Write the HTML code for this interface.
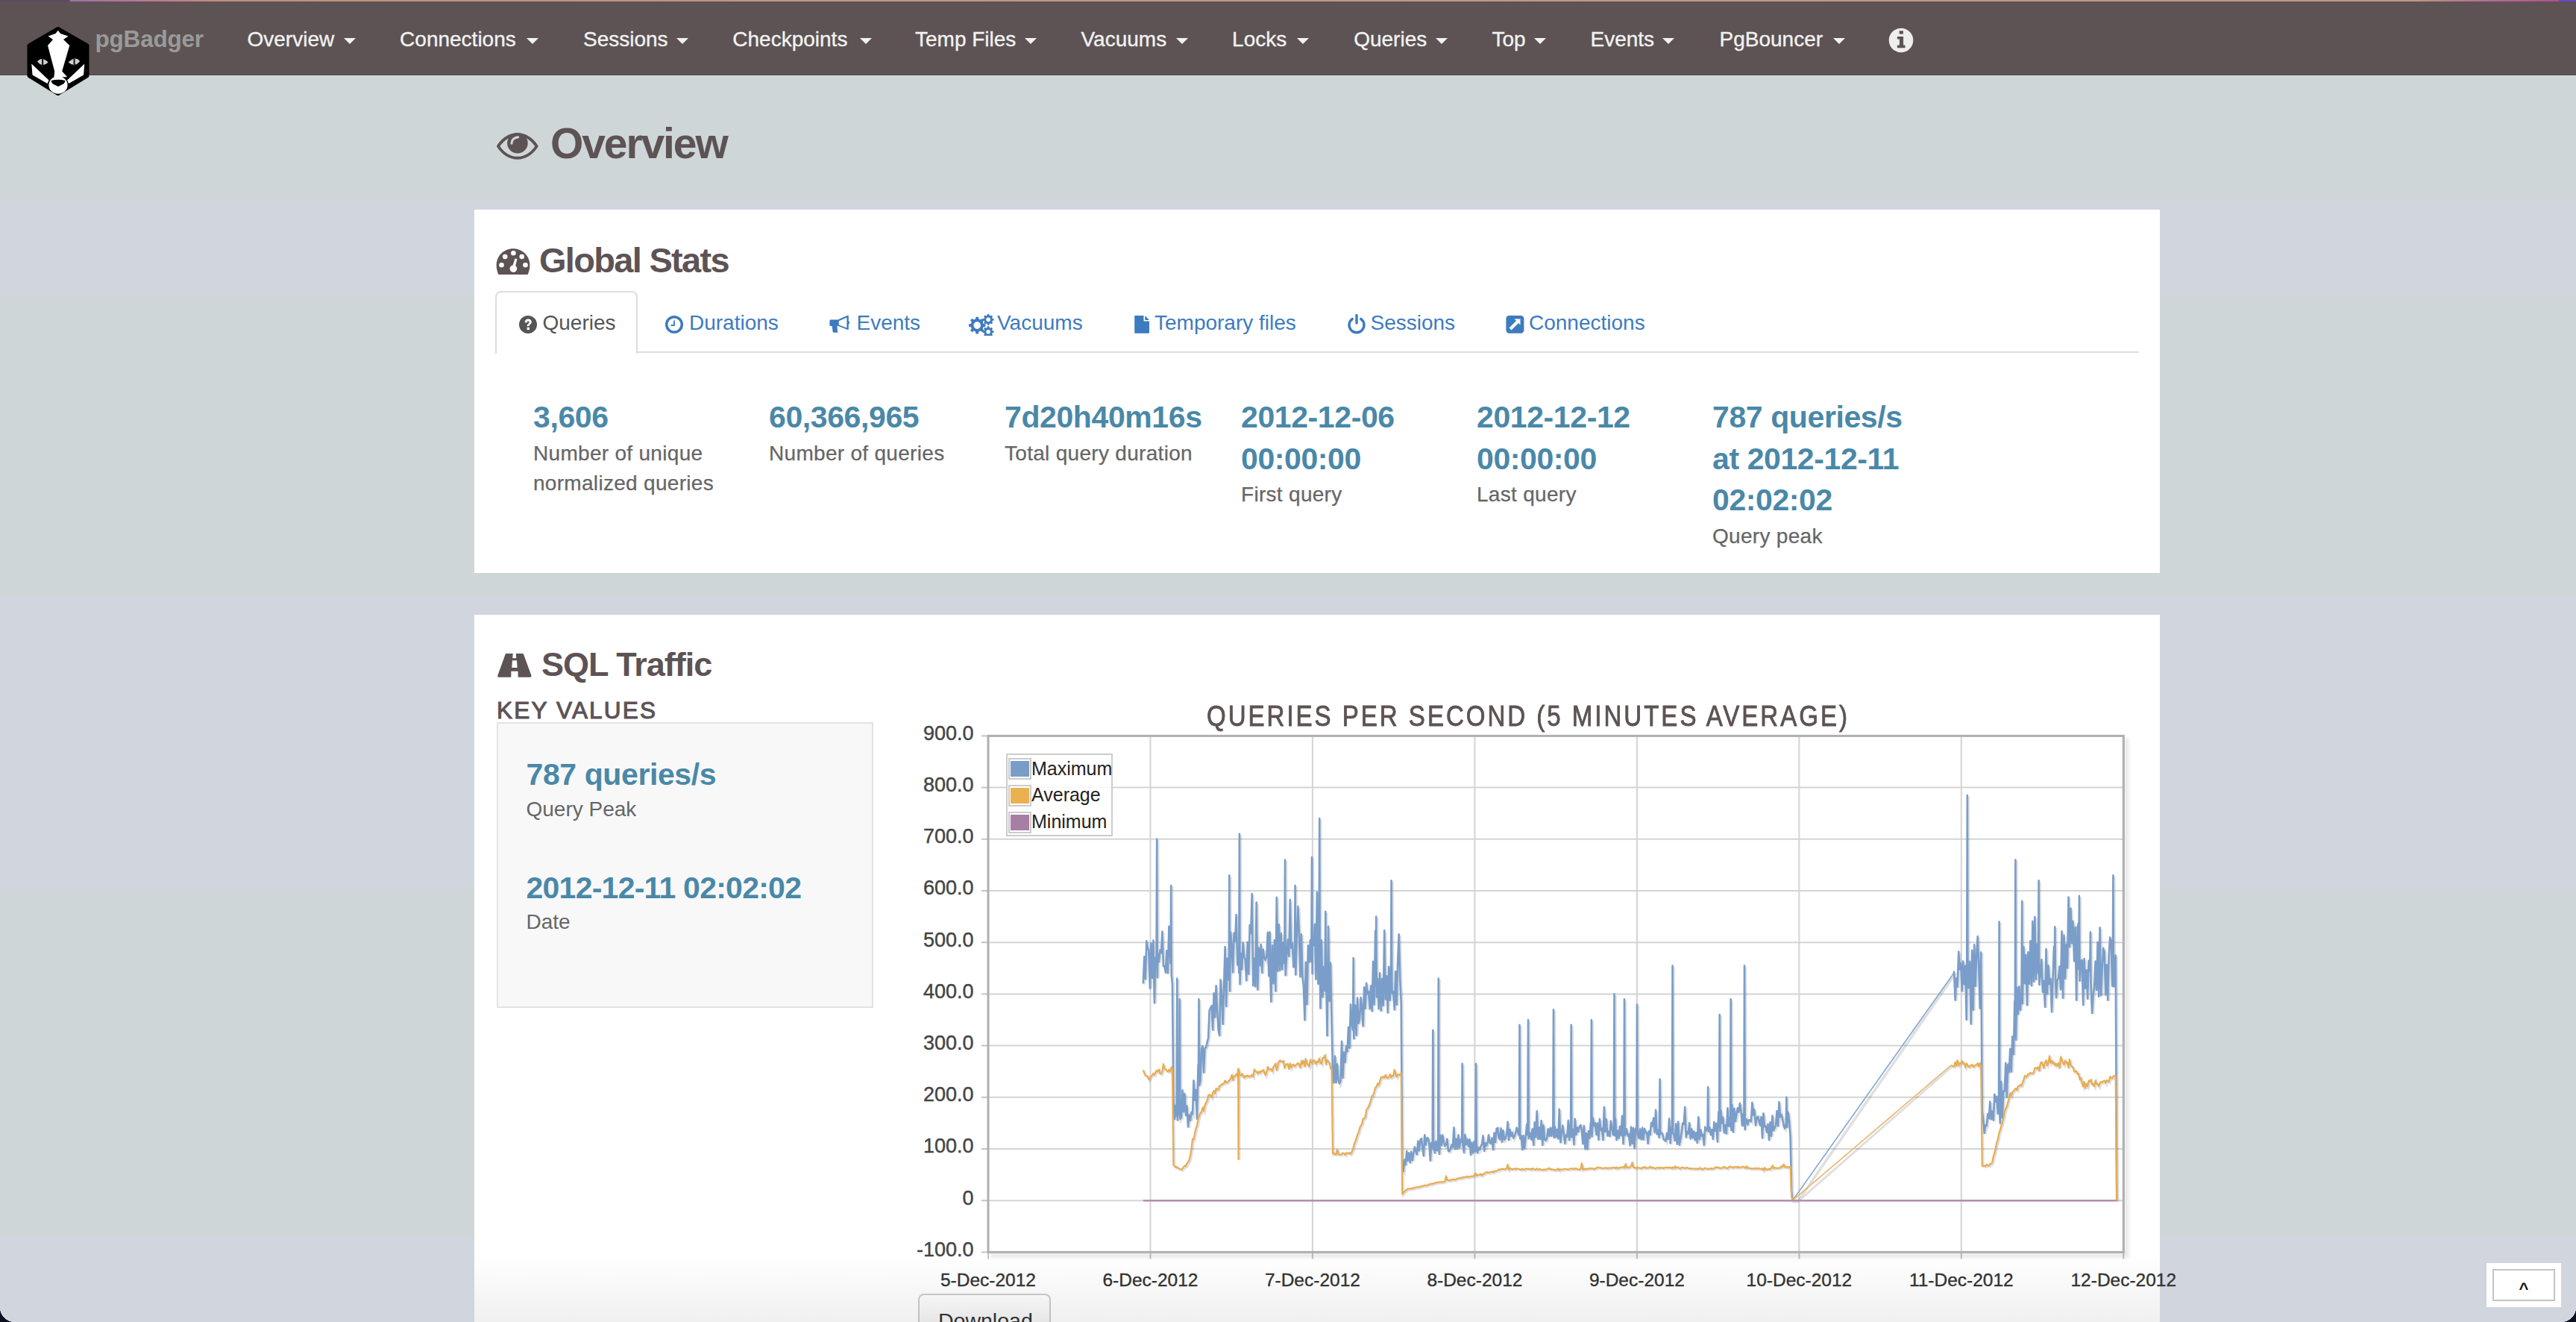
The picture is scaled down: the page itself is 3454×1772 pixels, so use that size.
<!DOCTYPE html>
<html><head><meta charset="utf-8"><title>pgBadger</title>
<style>
html,body{margin:0;padding:0;}
body{width:3454px;height:1772px;overflow:hidden;position:relative;background:linear-gradient(#ced6d8 0,#ced6d8 269px,#d1d5dd 269px,#d1d5dd 396px,#ced6d8 396px,#ced6d8 797px,#d1d5dd 797px,#d1d5dd 1191px,#ced6d8 1191px,#ced6d8 1658px,#d1d5dd 1658px);font-family:"Liberation Sans",sans-serif;}
.t{position:absolute;white-space:nowrap;font-family:"Liberation Sans",sans-serif;}
</style></head><body>
<div style="position:absolute;left:0px;top:0px;width:3454px;height:2px;background:linear-gradient(90deg,#5e4a5e 0,#5e4a5e 93px,#a070a8 94px,#c07a90 220px,#c09078 300px,#c09a80 2000px,#c09680 3240px,#b87890 3300px,#b05090 3430px,#6a48c8 3432px,#6a48c8 100%)"></div>
<div style="position:absolute;left:0px;top:2px;width:3454px;height:99px;background:#5d5354"></div>
<div style="position:absolute;left:0px;top:100px;width:3454px;height:1px;background:#4f4748"></div>
<div style="position:absolute;left:0px;top:101px;width:3454px;height:1px;background:#d6dde0"></div>
<svg style="position:absolute;left:0;top:0" width="140" height="140" viewBox="0 0 140 140">
<polygon points="77.8,38.5 117,61 117,101.5 77.8,125.5 39,101.5 39,61" fill="#000" stroke="#000" stroke-width="5" stroke-linejoin="round"/>
<path d="M77.8,40.8 L81,45 L91.5,48.5 L85,53 L93.3,60.9 L83.2,95.6 L90.2,103.3 L72.4,103.3 L73.2,95.6 L64,60.9 L71,53 L64.5,48.5 L74.5,45Z" fill="#fff"/>
<path d="M42.3,85.6 L43.5,100.5 L63.5,112 L65.5,107.5Z" fill="#fff"/>
<path d="M113.3,85.6 L112.1,100.5 L92.1,112 L90.1,107.5Z" fill="#fff"/>
<ellipse cx="78" cy="114" rx="12.6" ry="11.8" fill="#fff"/>
<path d="M68.6,108 Q78,105.5 87.5,108 Q87,112.5 82,114 L78,116 L74,114 Q69,112.5 68.6,108Z" fill="#000"/>
<path d="M50,82.5 Q56,75 64.7,83.5 Q57,91 50,82.5Z" fill="#d0d0d0"/>
<path d="M107.2,82 Q101,74.5 91.7,83.5 Q100,91 107.2,82Z" fill="#d0d0d0"/>
<rect x="56" y="79" width="2.2" height="9" fill="#222"/><rect x="98.5" y="79" width="2.2" height="9" fill="#222"/>
</svg>
<div class="t" style="left:127.5px;top:36.8px;font-size:31.5px;line-height:31.5px;color:#9a9a9a;font-weight:700;letter-spacing:-0.2px;">pgBadger</div>
<div class="t" style="left:331.5px;top:39.3px;font-size:28px;line-height:28px;color:#f2f2f2;font-weight:400;-webkit-text-stroke:0.35px #f2f2f2;">Overview</div>
<div style="position:absolute;left:461.0px;top:51px;width:0;height:0;border-left:8px solid transparent;border-right:8px solid transparent;border-top:8px solid #f2f2f2"></div>
<div class="t" style="left:536.1px;top:39.3px;font-size:28px;line-height:28px;color:#f2f2f2;font-weight:400;-webkit-text-stroke:0.35px #f2f2f2;">Connections</div>
<div style="position:absolute;left:705.6px;top:51px;width:0;height:0;border-left:8px solid transparent;border-right:8px solid transparent;border-top:8px solid #f2f2f2"></div>
<div class="t" style="left:782.0px;top:39.3px;font-size:28px;line-height:28px;color:#f2f2f2;font-weight:400;-webkit-text-stroke:0.35px #f2f2f2;">Sessions</div>
<div style="position:absolute;left:907.0px;top:51px;width:0;height:0;border-left:8px solid transparent;border-right:8px solid transparent;border-top:8px solid #f2f2f2"></div>
<div class="t" style="left:982.3px;top:39.3px;font-size:28px;line-height:28px;color:#f2f2f2;font-weight:400;-webkit-text-stroke:0.35px #f2f2f2;">Checkpoints</div>
<div style="position:absolute;left:1153.0px;top:51px;width:0;height:0;border-left:8px solid transparent;border-right:8px solid transparent;border-top:8px solid #f2f2f2"></div>
<div class="t" style="left:1227.0px;top:39.3px;font-size:28px;line-height:28px;color:#f2f2f2;font-weight:400;-webkit-text-stroke:0.35px #f2f2f2;">Temp Files</div>
<div style="position:absolute;left:1374.0px;top:51px;width:0;height:0;border-left:8px solid transparent;border-right:8px solid transparent;border-top:8px solid #f2f2f2"></div>
<div class="t" style="left:1449.5px;top:39.3px;font-size:28px;line-height:28px;color:#f2f2f2;font-weight:400;-webkit-text-stroke:0.35px #f2f2f2;">Vacuums</div>
<div style="position:absolute;left:1577.0px;top:51px;width:0;height:0;border-left:8px solid transparent;border-right:8px solid transparent;border-top:8px solid #f2f2f2"></div>
<div class="t" style="left:1652.1px;top:39.3px;font-size:28px;line-height:28px;color:#f2f2f2;font-weight:400;-webkit-text-stroke:0.35px #f2f2f2;">Locks</div>
<div style="position:absolute;left:1739.0px;top:51px;width:0;height:0;border-left:8px solid transparent;border-right:8px solid transparent;border-top:8px solid #f2f2f2"></div>
<div class="t" style="left:1815.2px;top:39.3px;font-size:28px;line-height:28px;color:#f2f2f2;font-weight:400;-webkit-text-stroke:0.35px #f2f2f2;">Queries</div>
<div style="position:absolute;left:1924.6px;top:51px;width:0;height:0;border-left:8px solid transparent;border-right:8px solid transparent;border-top:8px solid #f2f2f2"></div>
<div class="t" style="left:2000.5px;top:39.3px;font-size:28px;line-height:28px;color:#f2f2f2;font-weight:400;-webkit-text-stroke:0.35px #f2f2f2;">Top</div>
<div style="position:absolute;left:2057.0px;top:51px;width:0;height:0;border-left:8px solid transparent;border-right:8px solid transparent;border-top:8px solid #f2f2f2"></div>
<div class="t" style="left:2132.5px;top:39.3px;font-size:28px;line-height:28px;color:#f2f2f2;font-weight:400;-webkit-text-stroke:0.35px #f2f2f2;">Events</div>
<div style="position:absolute;left:2229.0px;top:51px;width:0;height:0;border-left:8px solid transparent;border-right:8px solid transparent;border-top:8px solid #f2f2f2"></div>
<div class="t" style="left:2305.5px;top:39.3px;font-size:28px;line-height:28px;color:#f2f2f2;font-weight:400;-webkit-text-stroke:0.35px #f2f2f2;">PgBouncer</div>
<div style="position:absolute;left:2457.5px;top:51px;width:0;height:0;border-left:8px solid transparent;border-right:8px solid transparent;border-top:8px solid #f2f2f2"></div>
<svg style="position:absolute;left:2532px;top:37px" width="34" height="34" viewBox="0 0 34 34">
<circle cx="17" cy="17" r="16.3" fill="#eee"/>
<rect x="14.7" y="4.3" width="5.2" height="4.3" fill="#5d5354"/>
<path d="M11.9,11.9 H20.1 V23.5 H22.5 V27.2 H11.9 V23.5 H14.9 V15.6 H11.9Z" fill="#5d5354"/>
</svg>
<svg style="position:absolute;left:664px;top:176px" width="60" height="40" viewBox="0 0 60 40">
<path d="M3.9,20 C10,11 19,4.2 29.8,4.2 C40.6,4.2 49.6,11 55.7,20 C49.6,29 40.6,35.8 29.8,35.8 C19,35.8 10,29 3.9,20Z" fill="none" stroke="#5d5354" stroke-width="3.9" stroke-linejoin="round"/>
<circle cx="29.9" cy="15.8" r="13.8" fill="#5d5354"/>
<path d="M22,16.2 C22,11.5 25.5,8.2 30.5,7.8" fill="none" stroke="#cfd6d9" stroke-width="3.2" stroke-linecap="round"/>
</svg>
<div class="t" style="left:738.0px;top:163.7px;font-size:57px;line-height:57px;color:#5d5354;font-weight:700;letter-spacing:-2.1px;">Overview</div>
<div style="position:absolute;left:636px;top:281px;width:2260px;height:487px;background:#fff"></div>
<svg style="position:absolute;left:664px;top:331px" width="50" height="40" viewBox="0 0 50 40">
<path d="M4.5,37 C2.5,33 1.6,28.5 1.6,24.4 C1.6,12 11.6,2.2 24,2.2 C36.4,2.2 46.4,12 46.4,24.4 C46.4,28.5 45.5,33 43.5,37Z" fill="#5d5354"/>
<g fill="#fff"><circle cx="24.4" cy="8.3" r="3.3"/><circle cx="13.2" cy="13" r="3.3"/><circle cx="35.7" cy="13" r="3.3"/><circle cx="8.5" cy="24.2" r="3.3"/><circle cx="40.5" cy="24.2" r="3.3"/><circle cx="24.4" cy="29.2" r="4.8"/>
<path d="M26.5,15.5 L29.5,16 L26.5,28 L22.5,28Z"/></g>
</svg>
<div class="t" style="left:723.0px;top:324.7px;font-size:47px;line-height:47px;color:#5d5354;font-weight:700;letter-spacing:-1.7px;">Global Stats</div>
<div style="position:absolute;left:664px;top:471px;width:2204px;height:2px;background:#ddd"></div>
<div style="position:absolute;left:664px;top:390px;width:191px;height:84px;background:#fff;border:2px solid #ddd;border-bottom:none;border-radius:8px 8px 0 0;box-sizing:border-box"></div>
<svg style="position:absolute;left:695px;top:422px" width="26" height="26" viewBox="0 0 26 26">
<circle cx="13" cy="13" r="12" fill="#555"/>
<path d="M8.6,10.2 C8.6,7.4 10.6,5.6 13.3,5.6 C16,5.6 17.8,7.3 17.8,9.6 C17.8,12.6 14.7,12.9 14.7,15.3 L11.6,15.3 C11.6,11.6 14.6,11.5 14.6,9.9 C14.6,9.1 14.1,8.5 13.1,8.5 C12.1,8.5 11.6,9.2 11.6,10.5Z" fill="#fff"/>
<rect x="11.6" y="16.8" width="3.3" height="3.4" fill="#fff"/>
</svg>
<div class="t" style="left:727.5px;top:419.1px;font-size:28px;line-height:28px;color:#555;font-weight:400;">Queries</div>
<svg style="position:absolute;left:891px;top:422px" width="26" height="26" viewBox="0 0 26 26">
<circle cx="13" cy="13" r="10.3" fill="none" stroke="#3d7bbf" stroke-width="3.5"/>
<path d="M13,7.6 V14 H8.6" fill="none" stroke="#3d7bbf" stroke-width="1.8"/>
</svg>
<div class="t" style="left:924.0px;top:419.1px;font-size:28px;line-height:28px;color:#3d7bbf;font-weight:400;">Durations</div>
<svg style="position:absolute;left:1111px;top:422px" width="30" height="26" viewBox="0 0 30 26">
<path d="M1.5,7.5 Q1,6.8 2.5,6.5 L12.5,6.5 L25.6,0.8 Q26.8,0.4 26.8,1.8 L26.8,8.6 Q28.2,9 28.2,10.4 Q28.2,11.8 26.8,12.2 L26.8,19 Q26.8,20.3 25.6,19.9 L13,15 L11.5,15 L12,22 Q13,23 12,23.8 L6.5,23.8 Q5.8,23.5 5.6,22.5 L4.6,15 L2.5,15 Q1.3,14.7 1.3,13.5Z M13.8,8.2 V13.4 L24.4,17.6 V3.8Z" fill="#3d7bbf" fill-rule="evenodd"/>
</svg>
<div class="t" style="left:1148.5px;top:419.1px;font-size:28px;line-height:28px;color:#3d7bbf;font-weight:400;">Events</div>
<svg style="position:absolute;left:1299px;top:420px" width="34" height="30" viewBox="0 0 34 30">
<g fill="#3d7bbf">
<path d="M9.6,4.8 L12.8,4.8 L13.4,7.6 L15.6,8.6 L18,7 L20.3,9.3 L18.7,11.7 L19.6,13.9 L22.4,14.5 L22.4,17.7 L19.6,18.3 L18.7,20.5 L20.3,22.9 L18,25.2 L15.6,23.6 L13.4,24.6 L12.8,27.4 L9.6,27.4 L9,24.6 L6.8,23.6 L4.4,25.2 L2.1,22.9 L3.7,20.5 L2.8,18.3 L0,17.7 L0,14.5 L2.8,13.9 L3.7,11.7 L2.1,9.3 L4.4,7 L6.8,8.6 L9,7.6Z M11.2,11.3 A4.8,4.8 0 1,0 11.2,20.9 A4.8,4.8 0 1,0 11.2,11.3Z" fill-rule="evenodd"/>
<path d="M25,1 L27.2,1 L27.6,2.8 L29,3.4 L30.6,2.4 L32.1,3.9 L31.1,5.5 L31.7,6.9 L33.5,7.3 L33.5,9.5 L31.7,9.9 L31.1,11.3 L32.1,12.9 L30.6,14.4 L29,13.4 L27.6,14 L27.2,15.8 L25,15.8 L24.6,14 L23.2,13.4 L21.6,14.4 L20.1,12.9 L21.1,11.3 L20.5,9.9 L18.7,9.5 L18.7,7.3 L20.5,6.9 L21.1,5.5 L20.1,3.9 L21.6,2.4 L23.2,3.4 L24.6,2.8Z M26.1,5.6 A2.8,2.8 0 1,0 26.1,11.2 A2.8,2.8 0 1,0 26.1,5.6Z" fill-rule="evenodd"/>
<path d="M25,17.3 L27.2,17.3 L27.6,19.1 L29,19.7 L30.6,18.7 L32.1,20.2 L31.1,21.8 L31.7,23.2 L33.5,23.6 L33.5,25.8 L31.7,26.2 L31.1,27.6 L32.1,29.2 L30.6,30.7 L29,29.7 L27.6,30.3 L27.2,32.1 L25,32.1 L24.6,30.3 L23.2,29.7 L21.6,30.7 L20.1,29.2 L21.1,27.6 L20.5,26.2 L18.7,25.8 L18.7,23.6 L20.5,23.2 L21.1,21.8 L20.1,20.2 L21.6,18.7 L23.2,19.7 L24.6,19.1Z M26.1,21.9 A2.8,2.8 0 1,0 26.1,27.5 A2.8,2.8 0 1,0 26.1,21.9Z" fill-rule="evenodd"/>
</g></svg>
<div class="t" style="left:1337.0px;top:419.1px;font-size:28px;line-height:28px;color:#3d7bbf;font-weight:400;">Vacuums</div>
<svg style="position:absolute;left:1520px;top:422px" width="24" height="26" viewBox="0 0 24 26">
<path d="M1.8,1 L13.5,1 L13.5,8.5 L21,8.5 L21,23.8 Q21,24.8 20,24.8 L2.2,24.8 Q1.2,24.8 1.2,23.8 L1.2,1.8 Q1.2,1 1.8,1Z M15.3,1.2 L21,7 L15.3,7Z" fill="#3d7bbf"/>
</svg>
<div class="t" style="left:1548.0px;top:419.1px;font-size:28px;line-height:28px;color:#3d7bbf;font-weight:400;">Temporary files</div>
<svg style="position:absolute;left:1805px;top:420px" width="28" height="28" viewBox="0 0 28 28">
<path d="M8.3,7.5 A10,10 0 1,0 19.7,7.5" fill="none" stroke="#3d7bbf" stroke-width="3.4" stroke-linecap="round"/>
<path d="M14,2.5 V13" fill="none" stroke="#3d7bbf" stroke-width="3.4" stroke-linecap="round"/>
</svg>
<div class="t" style="left:1837.5px;top:419.1px;font-size:28px;line-height:28px;color:#3d7bbf;font-weight:400;">Sessions</div>
<svg style="position:absolute;left:2018px;top:422px" width="27" height="26" viewBox="0 0 27 26">
<rect x="1.4" y="1" width="24" height="23.8" rx="4.2" fill="#3d7bbf"/>
<path d="M5.5,17.5 L15,8 L12.5,5.6 L20.5,5.6 L20.5,13.6 L18,11.1 L8.6,20.6Z" fill="#fff"/>
</svg>
<div class="t" style="left:2050.0px;top:419.1px;font-size:28px;line-height:28px;color:#3d7bbf;font-weight:400;">Connections</div>
<div class="t" style="left:715.0px;top:539.2px;font-size:41px;line-height:41px;color:#4a88a8;font-weight:700;letter-spacing:-0.4px;">3,606</div>
<div class="t" style="left:715.0px;top:593.7px;font-size:28px;line-height:28px;color:#666;font-weight:400;letter-spacing:0.3px;-webkit-text-stroke:0.25px #666;">Number of unique</div>
<div class="t" style="left:715.0px;top:633.7px;font-size:28px;line-height:28px;color:#666;font-weight:400;letter-spacing:0.3px;-webkit-text-stroke:0.25px #666;">normalized queries</div>
<div class="t" style="left:1031.0px;top:539.2px;font-size:41px;line-height:41px;color:#4a88a8;font-weight:700;letter-spacing:-0.4px;">60,366,965</div>
<div class="t" style="left:1031.0px;top:593.7px;font-size:28px;line-height:28px;color:#666;font-weight:400;letter-spacing:0.3px;-webkit-text-stroke:0.25px #666;">Number of queries</div>
<div class="t" style="left:1347.0px;top:539.2px;font-size:41px;line-height:41px;color:#4a88a8;font-weight:700;letter-spacing:-0.4px;">7d20h40m16s</div>
<div class="t" style="left:1347.0px;top:593.7px;font-size:28px;line-height:28px;color:#666;font-weight:400;letter-spacing:0.3px;-webkit-text-stroke:0.25px #666;">Total query duration</div>
<div class="t" style="left:1664.0px;top:539.2px;font-size:41px;line-height:41px;color:#4a88a8;font-weight:700;letter-spacing:-0.4px;">2012-12-06</div>
<div class="t" style="left:1664.0px;top:594.8px;font-size:41px;line-height:41px;color:#4a88a8;font-weight:700;letter-spacing:-0.4px;">00:00:00</div>
<div class="t" style="left:1664.0px;top:649.3px;font-size:28px;line-height:28px;color:#666;font-weight:400;letter-spacing:0.3px;-webkit-text-stroke:0.25px #666;">First query</div>
<div class="t" style="left:1980.0px;top:539.2px;font-size:41px;line-height:41px;color:#4a88a8;font-weight:700;letter-spacing:-0.4px;">2012-12-12</div>
<div class="t" style="left:1980.0px;top:594.8px;font-size:41px;line-height:41px;color:#4a88a8;font-weight:700;letter-spacing:-0.4px;">00:00:00</div>
<div class="t" style="left:1980.0px;top:649.3px;font-size:28px;line-height:28px;color:#666;font-weight:400;letter-spacing:0.3px;-webkit-text-stroke:0.25px #666;">Last query</div>
<div class="t" style="left:2296.0px;top:539.2px;font-size:41px;line-height:41px;color:#4a88a8;font-weight:700;letter-spacing:-0.4px;">787 queries/s</div>
<div class="t" style="left:2296.0px;top:594.8px;font-size:41px;line-height:41px;color:#4a88a8;font-weight:700;letter-spacing:-0.4px;">at 2012-12-11</div>
<div class="t" style="left:2296.0px;top:650.4px;font-size:41px;line-height:41px;color:#4a88a8;font-weight:700;letter-spacing:-0.4px;">02:02:02</div>
<div class="t" style="left:2296.0px;top:704.9px;font-size:28px;line-height:28px;color:#666;font-weight:400;letter-spacing:0.3px;-webkit-text-stroke:0.25px #666;">Query peak</div>
<div style="position:absolute;left:636px;top:824px;width:2260px;height:948px;background:#fff"></div>
<svg style="position:absolute;left:665px;top:874px" width="50" height="36" viewBox="0 0 50 36">
<path d="M13.6,2.1 L22.7,2.1 L22.2,8.2 L27.2,8.2 L26.8,2.1 L35.8,2.1 Q36.6,2.1 37,3 L47.5,31.5 Q47.9,33.7 46,33.7 L29.7,33.7 L29.5,25.7 L20.4,25.7 L20.3,33.7 L3.6,33.7 Q1.8,33.7 2.3,31.5 L12.6,3 Q13,2.1 13.6,2.1Z M21.9,11.2 L21.3,21 L28.6,21 L28,11.2Z" fill="#5d5354" fill-rule="evenodd"/>
</svg>
<div class="t" style="left:726.0px;top:868.4px;font-size:45px;line-height:45px;color:#5d5354;font-weight:700;letter-spacing:-1.0px;">SQL Traffic</div>
<div class="t" style="left:666.0px;top:936.6px;font-size:31.5px;line-height:31.5px;color:#5d5354;font-weight:400;letter-spacing:2.2px;-webkit-text-stroke:1.1px #5d5354;">KEY VALUES</div>
<div style="position:absolute;left:666px;top:968px;width:505px;height:383px;background:#f8f8f8;border:2px solid #e3e3e3;box-sizing:border-box"></div>
<div class="t" style="left:705.5px;top:1018.3px;font-size:41px;line-height:41px;color:#4a88a8;font-weight:700;letter-spacing:-0.4px;">787 queries/s</div>
<div class="t" style="left:705.5px;top:1070.9px;font-size:28px;line-height:28px;color:#666;font-weight:400;">Query Peak</div>
<div class="t" style="left:705.5px;top:1169.8px;font-size:41px;line-height:41px;color:#4a88a8;font-weight:700;letter-spacing:-0.75px;">2012-12-11 02:02:02</div>
<div class="t" style="left:705.5px;top:1222.3px;font-size:28px;line-height:28px;color:#666;font-weight:400;">Date</div>
<svg style="position:absolute;left:0;top:0" width="3454" height="1772" viewBox="0 0 3454 1772">
<line x1="1325.0" y1="1678.4" x2="2847.3" y2="1678.4" stroke="#d4d4d4" stroke-width="2"/>
<line x1="1316.0" y1="1678.4" x2="1325.0" y2="1678.4" stroke="#c4c4c4" stroke-width="2"/>
<line x1="1325.0" y1="1609.2" x2="2847.3" y2="1609.2" stroke="#d4d4d4" stroke-width="2"/>
<line x1="1316.0" y1="1609.2" x2="1325.0" y2="1609.2" stroke="#c4c4c4" stroke-width="2"/>
<line x1="1325.0" y1="1540.0" x2="2847.3" y2="1540.0" stroke="#d4d4d4" stroke-width="2"/>
<line x1="1316.0" y1="1540.0" x2="1325.0" y2="1540.0" stroke="#c4c4c4" stroke-width="2"/>
<line x1="1325.0" y1="1470.8" x2="2847.3" y2="1470.8" stroke="#d4d4d4" stroke-width="2"/>
<line x1="1316.0" y1="1470.8" x2="1325.0" y2="1470.8" stroke="#c4c4c4" stroke-width="2"/>
<line x1="1325.0" y1="1401.6" x2="2847.3" y2="1401.6" stroke="#d4d4d4" stroke-width="2"/>
<line x1="1316.0" y1="1401.6" x2="1325.0" y2="1401.6" stroke="#c4c4c4" stroke-width="2"/>
<line x1="1325.0" y1="1332.4" x2="2847.3" y2="1332.4" stroke="#d4d4d4" stroke-width="2"/>
<line x1="1316.0" y1="1332.4" x2="1325.0" y2="1332.4" stroke="#c4c4c4" stroke-width="2"/>
<line x1="1325.0" y1="1263.2" x2="2847.3" y2="1263.2" stroke="#d4d4d4" stroke-width="2"/>
<line x1="1316.0" y1="1263.2" x2="1325.0" y2="1263.2" stroke="#c4c4c4" stroke-width="2"/>
<line x1="1325.0" y1="1194.0" x2="2847.3" y2="1194.0" stroke="#d4d4d4" stroke-width="2"/>
<line x1="1316.0" y1="1194.0" x2="1325.0" y2="1194.0" stroke="#c4c4c4" stroke-width="2"/>
<line x1="1325.0" y1="1124.8" x2="2847.3" y2="1124.8" stroke="#d4d4d4" stroke-width="2"/>
<line x1="1316.0" y1="1124.8" x2="1325.0" y2="1124.8" stroke="#c4c4c4" stroke-width="2"/>
<line x1="1325.0" y1="1055.6" x2="2847.3" y2="1055.6" stroke="#d4d4d4" stroke-width="2"/>
<line x1="1316.0" y1="1055.6" x2="1325.0" y2="1055.6" stroke="#c4c4c4" stroke-width="2"/>
<line x1="1325.0" y1="986.4" x2="2847.3" y2="986.4" stroke="#d4d4d4" stroke-width="2"/>
<line x1="1316.0" y1="986.4" x2="1325.0" y2="986.4" stroke="#c4c4c4" stroke-width="2"/>
<line x1="1325.0" y1="986.4" x2="1325.0" y2="1678.4" stroke="#d4d4d4" stroke-width="2"/>
<line x1="1325.0" y1="1678.4" x2="1325.0" y2="1687.4" stroke="#c4c4c4" stroke-width="2"/>
<line x1="1542.5" y1="986.4" x2="1542.5" y2="1678.4" stroke="#d4d4d4" stroke-width="2"/>
<line x1="1542.5" y1="1678.4" x2="1542.5" y2="1687.4" stroke="#c4c4c4" stroke-width="2"/>
<line x1="1759.9" y1="986.4" x2="1759.9" y2="1678.4" stroke="#d4d4d4" stroke-width="2"/>
<line x1="1759.9" y1="1678.4" x2="1759.9" y2="1687.4" stroke="#c4c4c4" stroke-width="2"/>
<line x1="1977.4" y1="986.4" x2="1977.4" y2="1678.4" stroke="#d4d4d4" stroke-width="2"/>
<line x1="1977.4" y1="1678.4" x2="1977.4" y2="1687.4" stroke="#c4c4c4" stroke-width="2"/>
<line x1="2194.9" y1="986.4" x2="2194.9" y2="1678.4" stroke="#d4d4d4" stroke-width="2"/>
<line x1="2194.9" y1="1678.4" x2="2194.9" y2="1687.4" stroke="#c4c4c4" stroke-width="2"/>
<line x1="2412.4" y1="986.4" x2="2412.4" y2="1678.4" stroke="#d4d4d4" stroke-width="2"/>
<line x1="2412.4" y1="1678.4" x2="2412.4" y2="1687.4" stroke="#c4c4c4" stroke-width="2"/>
<line x1="2629.8" y1="986.4" x2="2629.8" y2="1678.4" stroke="#d4d4d4" stroke-width="2"/>
<line x1="2629.8" y1="1678.4" x2="2629.8" y2="1687.4" stroke="#c4c4c4" stroke-width="2"/>
<line x1="2847.3" y1="986.4" x2="2847.3" y2="1678.4" stroke="#d4d4d4" stroke-width="2"/>
<line x1="2847.3" y1="1678.4" x2="2847.3" y2="1687.4" stroke="#c4c4c4" stroke-width="2"/>
<path d="M1328.0,1682.4 H2851.3 V989.4" fill="none" stroke="#000" stroke-opacity="0.09" stroke-width="6" filter="url(#blur)"/>
<defs><filter id="blur" x="-1%" y="-1%" width="102%" height="102%"><feGaussianBlur stdDeviation="2"/></filter></defs>
<rect x="1325.0" y="986.4" width="1522.3000000000002" height="692.0000000000001" fill="none" stroke="#b0b0b0" stroke-width="3"/>
<g transform="translate(1.5,1.5)" opacity="0.12"><polyline points="1532.8,1434.3 1534.3,1438.0 1535.8,1441.8 1537.3,1442.0 1538.8,1442.5 1540.3,1447.2 1541.9,1444.6 1543.4,1442.6 1544.9,1441.5 1546.4,1438.7 1547.9,1440.5 1549.4,1437.3 1550.9,1434.9 1552.4,1436.5 1553.9,1433.6 1555.4,1438.7 1556.9,1439.4 1558.4,1436.1 1559.9,1426.1 1561.4,1432.4 1562.9,1433.4 1564.4,1435.0 1565.9,1436.4 1567.4,1433.9 1568.9,1436.3 1570.4,1430.6 1571.9,1433.1 1573.4,1561.7 1574.9,1562.9 1576.4,1564.7 1577.9,1564.0 1579.4,1565.5 1581.0,1566.4 1582.5,1567.1 1584.0,1567.8 1585.5,1566.4 1587.0,1564.4 1588.5,1562.3 1590.0,1563.0 1591.5,1559.5 1593.0,1557.6 1594.5,1554.7 1596.0,1548.6 1597.5,1540.0 1599.0,1526.7 1600.5,1527.2 1602.0,1519.4 1603.5,1512.4 1605.0,1508.8 1606.5,1500.1 1608.0,1495.3 1609.5,1492.2 1611.0,1490.3 1612.5,1484.6 1614.0,1489.2 1615.5,1481.8 1617.0,1477.9 1618.5,1475.9 1620.1,1468.3 1621.6,1467.2 1623.1,1468.2 1624.6,1471.1 1626.1,1465.4 1627.6,1462.0 1629.1,1465.7 1630.6,1458.9 1632.1,1460.4 1633.6,1460.5 1635.1,1455.4 1636.6,1455.3 1638.1,1453.1 1639.6,1453.1 1641.1,1452.0 1642.6,1448.5 1644.1,1451.1 1645.6,1450.6 1647.1,1449.2 1648.6,1447.9 1650.1,1445.5 1651.6,1440.8 1653.1,1448.0 1654.6,1442.7 1656.1,1442.6 1657.6,1439.8 1659.2,1441.9 1660.1,1432.7 1660.5,1553.8 1660.9,1432.7 1662.2,1440.7 1663.7,1441.7 1665.2,1439.1 1666.7,1442.1 1668.2,1444.6 1669.7,1442.1 1671.2,1442.8 1672.7,1441.4 1674.2,1443.3 1675.7,1442.4 1677.2,1442.5 1678.7,1440.5 1680.2,1443.1 1681.7,1433.7 1683.2,1435.8 1684.7,1436.4 1686.2,1438.9 1687.7,1436.3 1689.2,1438.1 1690.7,1435.6 1692.2,1436.4 1693.7,1433.9 1695.2,1437.4 1696.8,1441.2 1698.3,1436.8 1699.8,1430.1 1701.3,1433.3 1702.8,1433.4 1704.3,1432.6 1705.8,1436.0 1707.3,1430.3 1708.8,1428.1 1710.3,1425.6 1711.8,1434.5 1713.3,1427.9 1714.8,1422.9 1716.3,1421.2 1717.8,1422.9 1719.3,1423.3 1720.8,1421.9 1722.3,1431.5 1723.8,1427.3 1725.3,1426.3 1726.8,1426.0 1728.3,1432.9 1729.8,1425.4 1731.3,1430.7 1732.8,1427.5 1734.3,1426.7 1735.9,1429.3 1737.4,1427.7 1738.9,1426.3 1740.4,1424.8 1741.9,1426.8 1743.4,1431.2 1744.9,1422.1 1746.4,1426.0 1747.9,1421.7 1749.4,1429.5 1750.9,1419.3 1752.4,1426.0 1753.9,1427.1 1755.4,1429.7 1756.9,1420.7 1758.4,1424.7 1759.9,1424.6 1761.4,1420.9 1762.9,1422.8 1764.4,1426.2 1765.9,1422.7 1767.4,1424.0 1768.9,1418.7 1770.4,1423.7 1771.9,1426.3 1773.4,1418.1 1775.0,1417.8 1776.5,1414.4 1778.0,1426.7 1779.5,1420.8 1781.0,1423.2 1782.5,1424.1 1784.0,1432.1 1785.5,1431.0 1787.0,1546.5 1788.5,1545.7 1790.0,1547.2 1791.5,1547.3 1793.0,1540.4 1794.5,1546.8 1796.0,1547.7 1797.5,1547.6 1799.0,1546.7 1800.5,1545.4 1802.0,1546.3 1803.5,1548.0 1805.0,1545.1 1806.5,1546.1 1808.0,1545.9 1809.5,1544.8 1811.0,1546.8 1812.5,1544.0 1814.1,1540.2 1815.6,1534.0 1817.1,1530.4 1818.6,1526.2 1820.1,1520.8 1821.6,1518.1 1823.1,1512.0 1824.6,1509.1 1826.1,1506.4 1827.6,1499.7 1829.1,1499.4 1830.6,1497.1 1832.1,1487.6 1833.6,1485.6 1835.1,1483.1 1836.6,1479.3 1838.1,1474.4 1839.6,1468.8 1841.1,1468.2 1842.6,1463.2 1844.1,1457.7 1845.6,1456.8 1847.1,1452.3 1848.6,1454.3 1850.1,1449.3 1851.7,1443.7 1853.2,1444.5 1854.7,1442.9 1856.2,1444.4 1857.7,1440.8 1859.2,1444.3 1860.7,1444.9 1862.2,1443.7 1863.7,1440.1 1865.2,1444.3 1866.7,1441.7 1868.2,1442.4 1869.7,1433.8 1871.2,1439.4 1872.7,1443.5 1874.2,1440.2 1875.7,1440.8 1877.2,1439.8 1878.7,1438.1 1880.2,1600.6 1881.7,1598.7 1883.2,1597.2 1884.7,1595.5 1886.2,1594.5 1887.7,1593.4 1889.2,1593.4 1890.8,1593.4 1892.3,1593.1 1893.8,1592.6 1895.3,1592.8 1896.8,1591.9 1898.3,1591.5 1899.8,1591.3 1901.3,1591.3 1902.8,1590.9 1904.3,1590.5 1905.8,1590.2 1907.3,1589.5 1908.8,1589.3 1910.3,1588.7 1911.8,1589.0 1913.3,1588.8 1914.8,1588.1 1916.3,1587.6 1917.8,1586.7 1919.3,1587.1 1920.8,1586.6 1922.3,1586.2 1923.8,1585.9 1925.3,1584.9 1926.8,1585.1 1928.3,1584.9 1929.9,1584.2 1931.4,1584.7 1932.9,1584.1 1934.4,1584.5 1935.9,1584.0 1937.4,1583.2 1938.9,1576.4 1940.4,1581.9 1941.9,1581.7 1943.4,1582.1 1944.9,1582.0 1946.4,1581.1 1947.9,1581.1 1949.4,1580.4 1950.9,1581.5 1952.4,1580.7 1953.9,1579.7 1955.4,1579.4 1956.9,1579.1 1958.4,1578.6 1959.9,1579.2 1961.4,1577.9 1962.9,1577.5 1964.4,1577.7 1965.9,1577.7 1967.4,1576.7 1969.0,1578.0 1970.5,1577.3 1972.0,1576.5 1973.5,1576.9 1975.0,1576.5 1976.5,1575.7 1978.0,1572.7 1979.5,1576.0 1981.0,1574.6 1982.5,1574.6 1984.0,1574.8 1985.5,1573.4 1987.0,1575.6 1988.5,1573.6 1990.0,1573.6 1991.5,1571.8 1993.0,1571.4 1994.5,1571.2 1996.0,1571.9 1997.5,1571.4 1999.0,1570.7 2000.5,1570.3 2002.0,1571.5 2003.5,1569.6 2005.0,1569.6 2006.6,1569.3 2008.1,1568.8 2009.6,1567.4 2011.1,1567.9 2012.6,1567.1 2014.1,1566.6 2015.6,1567.0 2017.1,1567.0 2018.6,1567.1 2020.1,1566.1 2021.6,1561.0 2023.1,1568.1 2024.6,1566.1 2026.1,1566.5 2027.6,1567.4 2029.1,1566.5 2030.6,1566.3 2032.1,1567.3 2033.6,1566.0 2035.1,1566.6 2036.6,1566.8 2038.1,1567.4 2039.6,1567.9 2041.1,1566.6 2042.6,1567.5 2044.1,1567.6 2045.7,1566.3 2047.2,1566.8 2048.7,1566.9 2050.2,1566.9 2051.7,1566.6 2053.2,1567.7 2054.7,1565.9 2056.2,1566.8 2057.7,1567.6 2059.2,1567.4 2060.7,1566.1 2062.2,1567.9 2063.7,1567.3 2065.2,1566.9 2066.7,1567.7 2068.2,1568.4 2069.7,1567.4 2071.2,1567.6 2072.7,1567.7 2074.2,1566.9 2075.7,1566.5 2077.2,1565.6 2078.7,1567.3 2080.2,1567.1 2081.7,1567.4 2083.2,1567.6 2084.8,1568.7 2086.3,1567.5 2087.8,1567.7 2089.3,1566.2 2090.8,1568.8 2092.3,1567.3 2093.8,1567.7 2095.3,1567.5 2096.8,1566.9 2098.3,1566.8 2099.8,1566.9 2101.3,1567.3 2102.8,1567.4 2104.3,1567.2 2105.8,1566.7 2107.3,1566.4 2108.8,1566.3 2110.3,1567.1 2111.8,1566.2 2113.3,1566.1 2114.8,1567.1 2116.3,1567.7 2117.8,1567.3 2119.3,1567.1 2120.8,1559.2 2122.3,1567.7 2123.9,1566.3 2125.4,1567.4 2126.9,1566.4 2128.4,1567.0 2129.9,1566.2 2131.4,1565.8 2132.9,1566.6 2134.4,1565.8 2135.9,1566.4 2137.4,1567.4 2138.9,1566.0 2140.4,1565.8 2141.9,1564.7 2143.4,1564.7 2144.9,1565.5 2146.4,1565.2 2147.9,1565.6 2149.4,1565.8 2150.9,1565.7 2152.4,1565.5 2153.9,1565.2 2155.4,1566.2 2156.9,1565.5 2158.4,1565.7 2159.9,1565.2 2161.5,1565.6 2163.0,1564.9 2164.5,1564.6 2166.0,1566.0 2167.5,1564.4 2169.0,1566.0 2170.5,1565.6 2172.0,1564.6 2173.5,1565.0 2175.0,1564.4 2176.5,1564.2 2178.0,1565.5 2179.5,1560.5 2181.0,1564.9 2182.5,1564.9 2184.0,1564.6 2185.5,1564.2 2187.0,1563.4 2188.5,1558.6 2190.0,1564.1 2191.5,1565.4 2193.0,1565.2 2194.5,1565.8 2196.0,1564.6 2197.5,1565.2 2199.0,1565.6 2200.6,1566.2 2202.1,1564.7 2203.6,1565.2 2205.1,1563.8 2206.6,1565.6 2208.1,1565.4 2209.6,1565.3 2211.1,1565.1 2212.6,1563.6 2214.1,1565.4 2215.6,1564.9 2217.1,1565.2 2218.6,1566.1 2220.1,1565.6 2221.6,1565.3 2223.1,1565.0 2224.6,1565.8 2226.1,1564.8 2227.6,1565.3 2229.1,1565.4 2230.6,1565.8 2232.1,1565.0 2233.6,1565.0 2235.1,1564.6 2236.6,1565.2 2238.1,1564.7 2239.7,1564.9 2241.2,1565.9 2242.7,1564.7 2244.2,1566.0 2245.7,1563.3 2247.2,1565.4 2248.7,1564.7 2250.2,1564.4 2251.7,1566.2 2253.2,1566.3 2254.7,1564.7 2256.2,1564.9 2257.7,1565.3 2259.2,1566.0 2260.7,1565.4 2262.2,1564.9 2263.7,1565.7 2265.2,1566.6 2266.7,1566.0 2268.2,1566.2 2269.7,1566.4 2271.2,1566.5 2272.7,1566.4 2274.2,1566.6 2275.7,1566.4 2277.3,1566.8 2278.8,1565.6 2280.3,1565.6 2281.8,1567.5 2283.3,1566.9 2284.8,1566.3 2286.3,1565.6 2287.8,1566.3 2289.3,1566.8 2290.8,1566.6 2292.3,1566.5 2293.8,1565.8 2295.3,1566.9 2296.8,1566.4 2298.3,1565.8 2299.8,1565.0 2301.3,1564.2 2302.8,1565.1 2304.3,1564.7 2305.8,1565.8 2307.3,1565.7 2308.8,1565.5 2310.3,1564.8 2311.8,1563.8 2313.3,1565.4 2314.8,1565.4 2316.4,1566.1 2317.9,1564.1 2319.4,1563.8 2320.9,1563.7 2322.4,1564.8 2323.9,1565.2 2325.4,1563.8 2326.9,1564.1 2328.4,1564.9 2329.9,1563.5 2331.4,1564.9 2332.9,1564.6 2334.4,1564.3 2335.9,1564.0 2337.4,1563.5 2338.9,1564.8 2340.4,1565.7 2341.9,1563.1 2343.4,1565.7 2344.9,1565.7 2346.4,1565.8 2347.9,1566.2 2349.4,1566.3 2350.9,1566.5 2352.4,1566.0 2353.9,1565.6 2355.5,1566.7 2357.0,1565.9 2358.5,1565.8 2360.0,1566.8 2361.5,1566.8 2363.0,1566.1 2364.5,1568.8 2366.0,1565.2 2367.5,1567.7 2369.0,1567.1 2370.5,1567.5 2372.0,1566.6 2373.5,1567.3 2375.0,1565.6 2376.5,1562.4 2378.0,1566.2 2379.5,1565.2 2381.0,1565.5 2382.5,1565.6 2384.0,1565.6 2385.5,1565.5 2387.0,1565.1 2388.5,1563.2 2390.0,1563.9 2391.5,1560.8 2393.0,1564.1 2394.6,1563.7 2396.1,1564.9 2397.6,1564.2 2399.1,1564.3 2400.6,1564.4 2402.1,1602.7 2403.5,1609.2 2409.0,1609.2 2616.1,1427.9 2620.1,1429.7 2621.6,1423.8 2623.1,1428.9 2624.6,1421.1 2626.2,1428.1 2627.7,1425.4 2629.2,1425.3 2630.7,1422.2 2632.2,1425.4 2633.7,1424.9 2635.2,1430.8 2636.7,1425.5 2638.2,1427.7 2639.7,1430.1 2641.2,1429.7 2642.7,1427.8 2644.2,1427.1 2645.7,1430.1 2647.2,1428.6 2648.7,1427.6 2650.2,1427.3 2651.7,1425.2 2653.2,1429.6 2654.7,1425.1 2656.2,1428.8 2657.7,1562.3 2659.2,1562.6 2660.7,1562.6 2662.2,1563.2 2663.7,1560.9 2665.3,1562.1 2666.8,1562.3 2668.3,1560.0 2669.8,1559.8 2671.3,1557.8 2672.8,1549.9 2674.3,1545.6 2675.8,1538.1 2677.3,1531.7 2678.8,1526.8 2680.3,1518.8 2681.8,1515.0 2683.3,1509.1 2684.8,1504.8 2686.3,1498.7 2687.8,1490.1 2689.3,1486.0 2690.8,1483.0 2692.3,1477.4 2693.8,1471.2 2695.3,1465.4 2696.8,1468.9 2698.3,1464.3 2699.8,1462.3 2701.3,1460.7 2702.8,1458.8 2704.4,1461.0 2705.9,1455.8 2707.4,1455.5 2708.9,1454.0 2710.4,1455.5 2711.9,1451.4 2713.4,1447.5 2714.9,1441.8 2716.4,1443.6 2717.9,1442.6 2719.4,1439.6 2720.9,1440.0 2722.4,1437.6 2723.9,1438.7 2725.4,1439.1 2726.9,1436.8 2728.4,1431.5 2729.9,1431.3 2731.4,1432.6 2732.9,1430.1 2734.4,1435.4 2735.9,1425.0 2737.4,1423.6 2738.9,1426.5 2740.4,1431.7 2742.0,1423.6 2743.5,1421.5 2745.0,1428.0 2746.5,1424.9 2748.0,1415.3 2749.5,1424.7 2751.0,1421.8 2752.5,1425.3 2754.0,1423.9 2755.5,1428.2 2757.0,1426.0 2758.5,1428.8 2760.0,1424.8 2761.5,1431.1 2763.0,1416.9 2764.5,1420.1 2766.0,1424.8 2767.5,1427.3 2769.0,1421.5 2770.5,1424.8 2772.0,1424.1 2773.5,1431.2 2775.0,1419.9 2776.5,1427.7 2778.0,1430.0 2779.5,1430.1 2781.1,1436.4 2782.6,1435.5 2784.1,1435.6 2785.6,1440.0 2787.1,1439.2 2788.6,1447.2 2790.1,1444.9 2791.6,1451.7 2793.1,1456.7 2794.6,1449.8 2796.1,1458.6 2797.6,1452.9 2799.1,1456.0 2800.6,1448.4 2802.1,1449.7 2803.6,1447.1 2805.1,1453.6 2806.6,1452.6 2808.1,1456.3 2809.6,1448.4 2811.1,1452.9 2812.6,1453.3 2814.1,1456.1 2815.6,1451.4 2817.1,1450.1 2818.6,1451.0 2820.2,1449.1 2821.7,1448.4 2823.2,1451.8 2824.7,1447.7 2826.2,1449.1 2827.7,1450.1 2829.2,1443.2 2830.7,1445.0 2832.2,1445.1 2833.7,1442.4 2835.2,1441.8 2836.7,1442.1 2838.2,1609.2" fill="none" stroke="#000" stroke-width="3"/><polyline points="1532.8,1318.3 1534.3,1282.3 1535.8,1312.1 1537.3,1261.3 1538.8,1270.2 1540.3,1275.2 1541.9,1324.5 1543.4,1264.0 1544.9,1310.9 1546.4,1260.6 1547.9,1344.3 1549.4,1283.6 1550.5,1294.6 1551.2,1124.8 1551.8,1310.3 1552.4,1278.2 1553.9,1289.1 1555.4,1273.5 1556.9,1277.4 1558.4,1248.6 1559.9,1295.0 1561.4,1294.9 1562.9,1303.8 1564.4,1274.3 1565.9,1304.3 1567.4,1241.9 1568.9,1275.1 1569.5,1291.2 1570.2,1187.1 1570.8,1307.1 1571.9,1318.7 1573.4,1477.7 1574.9,1500.0 1576.4,1481.6 1577.7,1495.8 1578.3,1311.6 1579.0,1501.5 1579.4,1466.1 1581.1,1494.1 1581.7,1339.3 1582.4,1499.8 1584.0,1497.5 1585.5,1461.2 1587.0,1490.3 1588.5,1466.2 1590.0,1495.2 1591.5,1482.5 1593.0,1510.5 1594.5,1494.5 1596.0,1501.8 1597.5,1490.7 1599.0,1493.3 1600.5,1448.4 1602.0,1474.8 1603.5,1461.0 1605.0,1499.8 1606.5,1427.3 1606.9,1446.6 1607.5,1339.3 1608.2,1454.7 1609.5,1448.8 1611.0,1405.6 1612.5,1402.3 1614.0,1437.4 1615.5,1404.8 1617.0,1404.0 1618.5,1397.6 1620.1,1391.3 1621.6,1354.3 1623.1,1350.9 1624.6,1348.1 1626.1,1380.4 1627.6,1331.2 1629.1,1363.5 1630.6,1321.4 1632.1,1354.4 1633.6,1380.5 1635.1,1387.9 1636.6,1313.2 1638.1,1333.8 1639.6,1372.6 1641.1,1320.2 1642.6,1269.1 1644.1,1349.0 1645.6,1284.6 1647.1,1302.0 1647.6,1313.7 1648.3,1173.2 1648.9,1328.5 1650.1,1249.6 1651.6,1268.5 1653.1,1303.1 1654.6,1250.6 1656.1,1261.1 1657.6,1226.0 1659.2,1293.5 1660.7,1278.3 1661.2,1304.0 1661.9,1117.9 1662.5,1319.3 1663.7,1277.9 1665.2,1299.1 1666.7,1263.7 1668.2,1281.9 1669.7,1286.4 1671.2,1314.3 1672.7,1262.8 1674.2,1305.7 1675.7,1240.1 1677.2,1251.0 1678.7,1198.1 1680.2,1321.1 1681.7,1284.5 1683.2,1322.3 1684.7,1209.6 1686.2,1326.5 1687.7,1270.5 1689.2,1293.9 1690.7,1266.1 1692.2,1303.9 1693.7,1272.6 1695.2,1283.3 1696.8,1287.0 1698.3,1281.1 1699.8,1249.9 1701.3,1308.1 1702.0,1292.6 1702.6,1249.4 1703.3,1308.4 1704.3,1342.6 1705.8,1267.0 1707.3,1318.3 1708.8,1260.4 1710.3,1328.4 1711.8,1202.9 1713.3,1301.8 1714.8,1239.4 1716.3,1300.4 1717.8,1251.0 1719.3,1299.1 1720.8,1263.2 1722.3,1291.3 1723.0,1152.5 1723.6,1307.2 1725.3,1278.6 1726.8,1259.2 1728.3,1281.6 1729.8,1206.1 1731.3,1270.7 1732.8,1264.4 1734.3,1296.3 1735.9,1290.4 1736.6,1187.1 1737.2,1306.4 1738.9,1254.3 1740.4,1215.0 1741.9,1248.9 1743.4,1309.1 1744.9,1252.4 1746.4,1309.0 1747.9,1322.0 1749.4,1367.2 1750.9,1289.8 1752.4,1346.2 1753.9,1267.4 1755.4,1289.5 1756.9,1260.2 1758.3,1289.0 1759.0,1149.0 1759.6,1305.0 1759.9,1255.0 1761.4,1267.3 1762.9,1238.9 1764.4,1312.5 1765.9,1196.0 1767.4,1318.7 1768.5,1288.4 1769.2,1097.1 1769.8,1304.4 1770.4,1351.5 1771.9,1260.4 1773.4,1336.4 1775.0,1296.1 1776.5,1328.3 1776.7,1287.9 1777.3,1221.7 1778.0,1303.9 1779.5,1388.3 1781.0,1241.7 1782.5,1341.6 1784.0,1290.7 1785.5,1367.1 1787.0,1437.6 1788.5,1451.3 1790.0,1415.5 1791.5,1451.0 1793.0,1426.4 1794.5,1447.2 1796.0,1452.4 1797.5,1448.5 1799.0,1395.9 1800.5,1444.6 1802.0,1410.5 1803.5,1423.9 1805.0,1402.3 1806.5,1409.5 1808.0,1376.8 1809.5,1404.4 1811.0,1346.2 1812.5,1372.2 1814.0,1380.8 1814.7,1284.0 1815.3,1392.3 1815.6,1376.9 1817.1,1347.3 1818.6,1387.7 1820.1,1337.5 1821.6,1371.7 1823.1,1365.7 1824.6,1337.0 1826.1,1350.9 1827.6,1375.4 1829.1,1323.3 1830.6,1351.7 1832.1,1317.7 1833.6,1332.3 1835.1,1329.1 1836.6,1352.3 1838.1,1321.4 1839.6,1355.1 1841.1,1288.8 1842.6,1346.4 1844.1,1247.7 1844.6,1322.0 1845.2,1228.6 1845.9,1336.4 1847.1,1311.8 1848.6,1352.2 1850.1,1304.2 1851.7,1354.6 1853.2,1312.1 1854.7,1347.8 1856.2,1247.1 1857.7,1339.4 1859.2,1308.4 1860.7,1357.3 1862.2,1295.8 1863.7,1340.7 1865.0,1300.1 1865.6,1180.2 1866.3,1315.6 1866.7,1331.3 1868.2,1329.5 1869.7,1353.3 1871.2,1302.1 1872.7,1346.7 1874.2,1287.4 1875.7,1252.4 1877.2,1311.2 1878.7,1344.2 1880.2,1567.9 1881.7,1570.1 1883.2,1554.6 1884.7,1561.1 1886.2,1542.9 1887.7,1555.7 1889.2,1545.4 1890.8,1558.4 1892.3,1543.6 1893.8,1555.3 1895.3,1545.8 1896.8,1537.2 1898.3,1543.2 1899.8,1547.4 1901.3,1529.6 1902.8,1542.3 1904.3,1528.2 1905.8,1526.0 1907.3,1538.9 1908.8,1549.2 1910.3,1521.2 1911.8,1534.4 1913.3,1525.6 1914.8,1525.5 1916.3,1532.1 1917.8,1555.7 1919.3,1532.1 1920.7,1537.5 1921.3,1380.8 1922.0,1541.0 1922.3,1529.8 1923.8,1545.3 1925.3,1529.7 1926.8,1542.1 1928.1,1536.2 1928.8,1311.6 1929.4,1539.8 1929.9,1546.8 1931.4,1521.6 1932.9,1535.2 1934.4,1521.5 1935.9,1531.3 1937.4,1536.2 1938.9,1534.3 1940.4,1526.6 1941.9,1542.9 1943.4,1543.0 1944.9,1539.8 1946.4,1534.3 1947.9,1537.6 1949.4,1511.3 1950.9,1540.1 1952.4,1526.6 1953.9,1539.9 1955.4,1521.4 1956.9,1538.2 1958.4,1527.6 1960.1,1531.0 1960.7,1425.8 1961.4,1534.9 1962.9,1544.9 1964.4,1520.9 1965.9,1534.1 1967.4,1527.1 1969.0,1536.7 1970.5,1527.0 1972.0,1548.0 1973.5,1531.5 1975.0,1545.3 1976.5,1530.2 1978.0,1543.5 1978.4,1528.2 1979.0,1425.8 1979.7,1532.3 1981.0,1545.3 1982.5,1538.4 1984.0,1541.0 1985.5,1536.4 1987.0,1533.6 1988.5,1522.4 1990.0,1542.7 1991.5,1531.9 1993.0,1535.8 1994.5,1531.4 1996.0,1521.2 1997.5,1531.6 1999.0,1532.6 2000.5,1525.5 2002.0,1541.0 2003.5,1518.6 2005.0,1531.2 2006.6,1512.8 2008.1,1511.8 2009.6,1524.6 2011.1,1527.3 2012.6,1512.4 2014.1,1530.4 2015.6,1515.2 2017.1,1527.6 2018.6,1525.7 2020.1,1520.7 2021.6,1503.7 2023.1,1528.0 2024.6,1514.1 2026.1,1522.7 2027.6,1518.2 2029.1,1525.5 2030.6,1523.2 2032.1,1518.9 2033.6,1511.5 2035.1,1517.3 2036.8,1521.9 2037.5,1373.9 2038.1,1526.3 2039.6,1522.4 2041.1,1540.9 2042.6,1522.1 2044.1,1539.6 2045.7,1522.5 2047.2,1507.0 2048.3,1521.5 2049.0,1367.0 2049.7,1525.9 2050.2,1517.3 2051.7,1518.9 2053.2,1527.6 2054.7,1513.2 2056.2,1534.9 2057.7,1504.3 2059.2,1524.1 2060.7,1489.4 2062.2,1526.6 2063.7,1511.3 2065.2,1526.8 2066.7,1502.1 2068.2,1534.6 2069.7,1508.3 2071.2,1527.3 2072.7,1528.7 2074.2,1525.2 2075.7,1513.3 2077.2,1522.9 2078.7,1511.9 2080.2,1522.6 2081.7,1510.7 2082.3,1520.4 2083.0,1353.2 2083.6,1524.8 2084.8,1510.4 2086.3,1524.1 2087.8,1514.1 2089.3,1526.4 2090.8,1486.9 2092.3,1531.1 2093.8,1520.1 2095.3,1508.6 2096.8,1519.6 2098.3,1532.9 2099.8,1521.3 2101.3,1523.6 2102.8,1501.7 2104.3,1528.1 2105.8,1507.3 2106.1,1519.6 2106.7,1373.9 2107.4,1524.1 2108.8,1513.9 2110.3,1534.2 2111.8,1499.9 2113.3,1521.0 2114.8,1511.2 2116.3,1517.0 2117.8,1509.7 2119.3,1508.2 2120.8,1514.7 2122.3,1533.2 2123.9,1509.0 2125.4,1540.1 2126.9,1519.0 2128.4,1540.5 2129.9,1516.0 2131.4,1525.4 2132.9,1504.5 2133.2,1518.7 2133.9,1367.0 2134.5,1523.2 2135.9,1498.5 2137.4,1509.1 2138.9,1505.3 2140.4,1521.0 2141.9,1505.5 2143.4,1527.7 2144.9,1499.9 2146.4,1514.9 2147.9,1512.7 2149.4,1528.0 2150.9,1483.9 2152.4,1517.0 2153.9,1500.2 2155.4,1522.3 2156.9,1516.5 2158.4,1523.1 2159.9,1502.6 2161.5,1512.6 2163.0,1521.1 2163.8,1517.6 2164.5,1332.4 2165.1,1522.2 2166.0,1499.0 2167.5,1527.9 2169.0,1515.6 2170.5,1525.6 2172.0,1509.8 2173.5,1522.0 2175.0,1495.7 2176.5,1533.3 2177.4,1517.2 2178.0,1339.3 2178.7,1521.8 2179.5,1519.6 2181.0,1513.2 2182.5,1522.5 2184.0,1520.0 2185.5,1535.3 2187.0,1510.6 2188.5,1532.8 2190.0,1511.7 2191.5,1538.9 2193.0,1512.8 2194.4,1516.6 2195.0,1346.2 2195.7,1521.2 2196.0,1516.8 2197.5,1525.9 2199.0,1513.3 2200.6,1527.4 2202.1,1511.6 2203.6,1527.5 2205.1,1512.9 2206.6,1518.2 2208.1,1517.9 2209.6,1532.8 2211.1,1516.1 2212.6,1521.1 2214.1,1504.7 2215.6,1509.4 2217.1,1498.6 2218.6,1518.0 2220.1,1487.8 2221.6,1520.2 2223.1,1514.5 2224.6,1524.7 2224.9,1515.4 2225.6,1446.6 2226.2,1520.1 2227.6,1518.3 2229.1,1519.8 2230.6,1527.5 2232.1,1527.4 2233.6,1529.7 2235.1,1518.8 2236.6,1526.9 2238.1,1499.3 2239.7,1532.5 2241.2,1510.7 2241.9,1514.4 2242.6,1294.3 2243.2,1519.2 2244.2,1520.3 2245.7,1529.0 2247.2,1506.3 2248.7,1533.4 2250.2,1503.6 2251.7,1534.6 2253.2,1527.4 2254.7,1518.0 2256.2,1505.5 2257.7,1507.1 2259.2,1483.7 2260.7,1524.5 2262.2,1517.1 2263.7,1519.9 2265.2,1505.2 2266.7,1526.4 2268.2,1513.2 2269.7,1525.2 2271.2,1516.5 2272.7,1528.4 2274.2,1518.3 2275.7,1531.9 2277.3,1497.3 2278.8,1527.2 2280.3,1514.2 2281.8,1522.7 2283.3,1520.7 2284.8,1534.9 2286.3,1510.6 2287.8,1515.5 2289.5,1511.7 2290.1,1457.0 2290.8,1516.6 2292.3,1511.0 2293.8,1521.1 2295.3,1514.3 2296.8,1526.9 2298.3,1504.1 2299.8,1515.6 2301.3,1505.8 2302.8,1530.5 2304.3,1490.2 2305.1,1510.8 2305.7,1360.1 2306.4,1515.8 2307.3,1488.1 2308.8,1505.4 2310.3,1497.6 2311.8,1518.3 2313.3,1508.4 2314.8,1519.6 2316.4,1485.3 2317.9,1509.5 2319.4,1498.2 2320.0,1510.0 2320.7,1339.3 2321.3,1515.0 2322.4,1481.0 2323.9,1517.4 2325.4,1485.7 2326.9,1503.0 2328.4,1493.7 2329.9,1485.1 2331.4,1490.6 2332.9,1478.7 2334.4,1488.3 2335.9,1508.6 2337.4,1493.4 2338.4,1509.0 2339.0,1294.3 2339.7,1514.0 2340.4,1503.3 2341.9,1500.4 2343.4,1507.5 2344.9,1501.3 2346.4,1501.6 2347.9,1503.2 2349.4,1477.7 2350.9,1494.4 2352.4,1487.4 2353.9,1508.5 2355.5,1499.0 2357.0,1496.5 2358.5,1502.7 2360.0,1508.5 2361.5,1497.0 2363.0,1525.2 2364.5,1492.3 2366.0,1510.1 2367.5,1509.7 2369.0,1517.8 2370.5,1506.9 2372.0,1528.0 2373.5,1504.4 2375.0,1522.7 2376.5,1495.5 2378.0,1515.2 2379.5,1511.7 2381.0,1508.9 2382.5,1489.2 2384.0,1509.1 2385.5,1477.0 2387.0,1497.3 2388.5,1494.1 2390.0,1499.6 2391.5,1508.8 2393.0,1512.6 2394.7,1505.7 2395.4,1470.8 2396.0,1510.9 2397.6,1490.7 2399.1,1503.5 2400.6,1523.6 2402.1,1596.1 2403.5,1609.2 2409.0,1609.2 2619.5,1304.7 2620.1,1302.7 2621.6,1340.5 2623.1,1311.4 2624.6,1322.6 2626.2,1275.6 2627.7,1299.1 2629.2,1291.4 2630.7,1328.2 2632.2,1288.5 2633.7,1319.2 2635.2,1294.6 2636.7,1366.7 2637.2,1299.6 2637.8,1066.0 2638.5,1315.1 2639.7,1324.3 2641.2,1288.9 2642.7,1372.4 2644.2,1273.9 2645.7,1353.8 2647.2,1266.4 2648.7,1321.6 2650.2,1280.3 2651.7,1255.1 2653.2,1294.0 2654.7,1351.4 2656.2,1276.6 2657.7,1489.2 2659.2,1500.8 2660.7,1518.7 2662.2,1508.3 2663.7,1508.8 2665.3,1493.0 2666.8,1499.3 2668.3,1476.5 2669.8,1500.2 2671.3,1489.9 2672.8,1501.6 2674.3,1466.8 2675.8,1476.7 2677.3,1469.7 2678.8,1492.8 2680.0,1488.1 2680.6,1235.5 2681.3,1494.2 2681.8,1505.5 2683.3,1449.8 2684.8,1498.2 2686.3,1462.5 2687.8,1462.7 2689.3,1424.8 2690.8,1470.6 2692.3,1426.6 2693.8,1437.2 2695.3,1405.8 2696.8,1436.4 2698.3,1389.4 2699.8,1413.2 2701.3,1342.2 2701.7,1382.2 2702.4,1152.5 2703.0,1393.6 2704.4,1323.6 2705.9,1359.3 2707.4,1322.3 2708.9,1353.8 2710.5,1331.2 2711.2,1207.8 2711.8,1345.1 2713.4,1269.0 2714.9,1318.2 2716.4,1279.8 2717.9,1347.3 2719.4,1276.2 2720.9,1318.6 2722.4,1261.2 2723.9,1321.3 2725.4,1234.9 2726.9,1315.7 2728.4,1229.1 2729.9,1312.6 2731.4,1265.9 2733.0,1304.7 2733.6,1180.2 2734.3,1319.9 2735.9,1305.0 2737.4,1286.3 2738.9,1329.7 2740.4,1314.7 2742.0,1349.7 2743.5,1272.0 2745.0,1332.1 2746.5,1294.4 2748.0,1318.9 2749.5,1312.0 2751.0,1356.3 2752.5,1313.3 2754.0,1268.7 2754.7,1296.8 2755.3,1242.4 2756.0,1312.4 2757.0,1337.1 2758.5,1314.0 2760.0,1311.0 2761.5,1295.3 2763.0,1326.1 2764.5,1248.3 2766.0,1337.8 2767.5,1253.9 2769.0,1311.6 2770.5,1266.0 2772.0,1297.4 2773.5,1202.6 2775.0,1269.1 2776.5,1217.6 2778.0,1264.2 2779.5,1234.7 2781.1,1288.3 2782.6,1242.7 2784.1,1340.4 2785.6,1242.3 2787.1,1236.9 2787.3,1299.1 2787.9,1200.9 2788.6,1314.6 2790.1,1288.1 2791.6,1286.9 2793.1,1347.0 2794.6,1285.0 2796.1,1324.7 2797.6,1300.2 2799.1,1338.7 2800.6,1287.7 2802.2,1301.8 2802.9,1249.4 2803.5,1317.2 2805.1,1357.9 2806.6,1333.9 2808.1,1323.2 2809.6,1288.5 2811.1,1326.9 2812.6,1262.8 2814.1,1335.6 2815.6,1243.2 2817.1,1334.0 2818.6,1301.3 2820.2,1270.9 2821.7,1276.0 2823.2,1333.4 2824.7,1293.3 2826.2,1340.5 2827.7,1279.7 2829.2,1256.5 2830.7,1261.9 2832.2,1321.5 2832.8,1307.4 2833.4,1173.2 2834.1,1322.5 2835.2,1313.1 2836.7,1280.6 2838.2,1609.2" fill="none" stroke="#000" stroke-width="3.5"/></g>
<polyline points="1532.8,1318.3 1534.3,1282.3 1535.8,1312.1 1537.3,1261.3 1538.8,1270.2 1540.3,1275.2 1541.9,1324.5 1543.4,1264.0 1544.9,1310.9 1546.4,1260.6 1547.9,1344.3 1549.4,1283.6 1550.5,1294.6 1551.2,1124.8 1551.8,1310.3 1552.4,1278.2 1553.9,1289.1 1555.4,1273.5 1556.9,1277.4 1558.4,1248.6 1559.9,1295.0 1561.4,1294.9 1562.9,1303.8 1564.4,1274.3 1565.9,1304.3 1567.4,1241.9 1568.9,1275.1 1569.5,1291.2 1570.2,1187.1 1570.8,1307.1 1571.9,1318.7 1573.4,1477.7 1574.9,1500.0 1576.4,1481.6 1577.7,1495.8 1578.3,1311.6 1579.0,1501.5 1579.4,1466.1 1581.1,1494.1 1581.7,1339.3 1582.4,1499.8 1584.0,1497.5 1585.5,1461.2 1587.0,1490.3 1588.5,1466.2 1590.0,1495.2 1591.5,1482.5 1593.0,1510.5 1594.5,1494.5 1596.0,1501.8 1597.5,1490.7 1599.0,1493.3 1600.5,1448.4 1602.0,1474.8 1603.5,1461.0 1605.0,1499.8 1606.5,1427.3 1606.9,1446.6 1607.5,1339.3 1608.2,1454.7 1609.5,1448.8 1611.0,1405.6 1612.5,1402.3 1614.0,1437.4 1615.5,1404.8 1617.0,1404.0 1618.5,1397.6 1620.1,1391.3 1621.6,1354.3 1623.1,1350.9 1624.6,1348.1 1626.1,1380.4 1627.6,1331.2 1629.1,1363.5 1630.6,1321.4 1632.1,1354.4 1633.6,1380.5 1635.1,1387.9 1636.6,1313.2 1638.1,1333.8 1639.6,1372.6 1641.1,1320.2 1642.6,1269.1 1644.1,1349.0 1645.6,1284.6 1647.1,1302.0 1647.6,1313.7 1648.3,1173.2 1648.9,1328.5 1650.1,1249.6 1651.6,1268.5 1653.1,1303.1 1654.6,1250.6 1656.1,1261.1 1657.6,1226.0 1659.2,1293.5 1660.7,1278.3 1661.2,1304.0 1661.9,1117.9 1662.5,1319.3 1663.7,1277.9 1665.2,1299.1 1666.7,1263.7 1668.2,1281.9 1669.7,1286.4 1671.2,1314.3 1672.7,1262.8 1674.2,1305.7 1675.7,1240.1 1677.2,1251.0 1678.7,1198.1 1680.2,1321.1 1681.7,1284.5 1683.2,1322.3 1684.7,1209.6 1686.2,1326.5 1687.7,1270.5 1689.2,1293.9 1690.7,1266.1 1692.2,1303.9 1693.7,1272.6 1695.2,1283.3 1696.8,1287.0 1698.3,1281.1 1699.8,1249.9 1701.3,1308.1 1702.0,1292.6 1702.6,1249.4 1703.3,1308.4 1704.3,1342.6 1705.8,1267.0 1707.3,1318.3 1708.8,1260.4 1710.3,1328.4 1711.8,1202.9 1713.3,1301.8 1714.8,1239.4 1716.3,1300.4 1717.8,1251.0 1719.3,1299.1 1720.8,1263.2 1722.3,1291.3 1723.0,1152.5 1723.6,1307.2 1725.3,1278.6 1726.8,1259.2 1728.3,1281.6 1729.8,1206.1 1731.3,1270.7 1732.8,1264.4 1734.3,1296.3 1735.9,1290.4 1736.6,1187.1 1737.2,1306.4 1738.9,1254.3 1740.4,1215.0 1741.9,1248.9 1743.4,1309.1 1744.9,1252.4 1746.4,1309.0 1747.9,1322.0 1749.4,1367.2 1750.9,1289.8 1752.4,1346.2 1753.9,1267.4 1755.4,1289.5 1756.9,1260.2 1758.3,1289.0 1759.0,1149.0 1759.6,1305.0 1759.9,1255.0 1761.4,1267.3 1762.9,1238.9 1764.4,1312.5 1765.9,1196.0 1767.4,1318.7 1768.5,1288.4 1769.2,1097.1 1769.8,1304.4 1770.4,1351.5 1771.9,1260.4 1773.4,1336.4 1775.0,1296.1 1776.5,1328.3 1776.7,1287.9 1777.3,1221.7 1778.0,1303.9 1779.5,1388.3 1781.0,1241.7 1782.5,1341.6 1784.0,1290.7 1785.5,1367.1 1787.0,1437.6 1788.5,1451.3 1790.0,1415.5 1791.5,1451.0 1793.0,1426.4 1794.5,1447.2 1796.0,1452.4 1797.5,1448.5 1799.0,1395.9 1800.5,1444.6 1802.0,1410.5 1803.5,1423.9 1805.0,1402.3 1806.5,1409.5 1808.0,1376.8 1809.5,1404.4 1811.0,1346.2 1812.5,1372.2 1814.0,1380.8 1814.7,1284.0 1815.3,1392.3 1815.6,1376.9 1817.1,1347.3 1818.6,1387.7 1820.1,1337.5 1821.6,1371.7 1823.1,1365.7 1824.6,1337.0 1826.1,1350.9 1827.6,1375.4 1829.1,1323.3 1830.6,1351.7 1832.1,1317.7 1833.6,1332.3 1835.1,1329.1 1836.6,1352.3 1838.1,1321.4 1839.6,1355.1 1841.1,1288.8 1842.6,1346.4 1844.1,1247.7 1844.6,1322.0 1845.2,1228.6 1845.9,1336.4 1847.1,1311.8 1848.6,1352.2 1850.1,1304.2 1851.7,1354.6 1853.2,1312.1 1854.7,1347.8 1856.2,1247.1 1857.7,1339.4 1859.2,1308.4 1860.7,1357.3 1862.2,1295.8 1863.7,1340.7 1865.0,1300.1 1865.6,1180.2 1866.3,1315.6 1866.7,1331.3 1868.2,1329.5 1869.7,1353.3 1871.2,1302.1 1872.7,1346.7 1874.2,1287.4 1875.7,1252.4 1877.2,1311.2 1878.7,1344.2 1880.2,1567.9 1881.7,1570.1 1883.2,1554.6 1884.7,1561.1 1886.2,1542.9 1887.7,1555.7 1889.2,1545.4 1890.8,1558.4 1892.3,1543.6 1893.8,1555.3 1895.3,1545.8 1896.8,1537.2 1898.3,1543.2 1899.8,1547.4 1901.3,1529.6 1902.8,1542.3 1904.3,1528.2 1905.8,1526.0 1907.3,1538.9 1908.8,1549.2 1910.3,1521.2 1911.8,1534.4 1913.3,1525.6 1914.8,1525.5 1916.3,1532.1 1917.8,1555.7 1919.3,1532.1 1920.7,1537.5 1921.3,1380.8 1922.0,1541.0 1922.3,1529.8 1923.8,1545.3 1925.3,1529.7 1926.8,1542.1 1928.1,1536.2 1928.8,1311.6 1929.4,1539.8 1929.9,1546.8 1931.4,1521.6 1932.9,1535.2 1934.4,1521.5 1935.9,1531.3 1937.4,1536.2 1938.9,1534.3 1940.4,1526.6 1941.9,1542.9 1943.4,1543.0 1944.9,1539.8 1946.4,1534.3 1947.9,1537.6 1949.4,1511.3 1950.9,1540.1 1952.4,1526.6 1953.9,1539.9 1955.4,1521.4 1956.9,1538.2 1958.4,1527.6 1960.1,1531.0 1960.7,1425.8 1961.4,1534.9 1962.9,1544.9 1964.4,1520.9 1965.9,1534.1 1967.4,1527.1 1969.0,1536.7 1970.5,1527.0 1972.0,1548.0 1973.5,1531.5 1975.0,1545.3 1976.5,1530.2 1978.0,1543.5 1978.4,1528.2 1979.0,1425.8 1979.7,1532.3 1981.0,1545.3 1982.5,1538.4 1984.0,1541.0 1985.5,1536.4 1987.0,1533.6 1988.5,1522.4 1990.0,1542.7 1991.5,1531.9 1993.0,1535.8 1994.5,1531.4 1996.0,1521.2 1997.5,1531.6 1999.0,1532.6 2000.5,1525.5 2002.0,1541.0 2003.5,1518.6 2005.0,1531.2 2006.6,1512.8 2008.1,1511.8 2009.6,1524.6 2011.1,1527.3 2012.6,1512.4 2014.1,1530.4 2015.6,1515.2 2017.1,1527.6 2018.6,1525.7 2020.1,1520.7 2021.6,1503.7 2023.1,1528.0 2024.6,1514.1 2026.1,1522.7 2027.6,1518.2 2029.1,1525.5 2030.6,1523.2 2032.1,1518.9 2033.6,1511.5 2035.1,1517.3 2036.8,1521.9 2037.5,1373.9 2038.1,1526.3 2039.6,1522.4 2041.1,1540.9 2042.6,1522.1 2044.1,1539.6 2045.7,1522.5 2047.2,1507.0 2048.3,1521.5 2049.0,1367.0 2049.7,1525.9 2050.2,1517.3 2051.7,1518.9 2053.2,1527.6 2054.7,1513.2 2056.2,1534.9 2057.7,1504.3 2059.2,1524.1 2060.7,1489.4 2062.2,1526.6 2063.7,1511.3 2065.2,1526.8 2066.7,1502.1 2068.2,1534.6 2069.7,1508.3 2071.2,1527.3 2072.7,1528.7 2074.2,1525.2 2075.7,1513.3 2077.2,1522.9 2078.7,1511.9 2080.2,1522.6 2081.7,1510.7 2082.3,1520.4 2083.0,1353.2 2083.6,1524.8 2084.8,1510.4 2086.3,1524.1 2087.8,1514.1 2089.3,1526.4 2090.8,1486.9 2092.3,1531.1 2093.8,1520.1 2095.3,1508.6 2096.8,1519.6 2098.3,1532.9 2099.8,1521.3 2101.3,1523.6 2102.8,1501.7 2104.3,1528.1 2105.8,1507.3 2106.1,1519.6 2106.7,1373.9 2107.4,1524.1 2108.8,1513.9 2110.3,1534.2 2111.8,1499.9 2113.3,1521.0 2114.8,1511.2 2116.3,1517.0 2117.8,1509.7 2119.3,1508.2 2120.8,1514.7 2122.3,1533.2 2123.9,1509.0 2125.4,1540.1 2126.9,1519.0 2128.4,1540.5 2129.9,1516.0 2131.4,1525.4 2132.9,1504.5 2133.2,1518.7 2133.9,1367.0 2134.5,1523.2 2135.9,1498.5 2137.4,1509.1 2138.9,1505.3 2140.4,1521.0 2141.9,1505.5 2143.4,1527.7 2144.9,1499.9 2146.4,1514.9 2147.9,1512.7 2149.4,1528.0 2150.9,1483.9 2152.4,1517.0 2153.9,1500.2 2155.4,1522.3 2156.9,1516.5 2158.4,1523.1 2159.9,1502.6 2161.5,1512.6 2163.0,1521.1 2163.8,1517.6 2164.5,1332.4 2165.1,1522.2 2166.0,1499.0 2167.5,1527.9 2169.0,1515.6 2170.5,1525.6 2172.0,1509.8 2173.5,1522.0 2175.0,1495.7 2176.5,1533.3 2177.4,1517.2 2178.0,1339.3 2178.7,1521.8 2179.5,1519.6 2181.0,1513.2 2182.5,1522.5 2184.0,1520.0 2185.5,1535.3 2187.0,1510.6 2188.5,1532.8 2190.0,1511.7 2191.5,1538.9 2193.0,1512.8 2194.4,1516.6 2195.0,1346.2 2195.7,1521.2 2196.0,1516.8 2197.5,1525.9 2199.0,1513.3 2200.6,1527.4 2202.1,1511.6 2203.6,1527.5 2205.1,1512.9 2206.6,1518.2 2208.1,1517.9 2209.6,1532.8 2211.1,1516.1 2212.6,1521.1 2214.1,1504.7 2215.6,1509.4 2217.1,1498.6 2218.6,1518.0 2220.1,1487.8 2221.6,1520.2 2223.1,1514.5 2224.6,1524.7 2224.9,1515.4 2225.6,1446.6 2226.2,1520.1 2227.6,1518.3 2229.1,1519.8 2230.6,1527.5 2232.1,1527.4 2233.6,1529.7 2235.1,1518.8 2236.6,1526.9 2238.1,1499.3 2239.7,1532.5 2241.2,1510.7 2241.9,1514.4 2242.6,1294.3 2243.2,1519.2 2244.2,1520.3 2245.7,1529.0 2247.2,1506.3 2248.7,1533.4 2250.2,1503.6 2251.7,1534.6 2253.2,1527.4 2254.7,1518.0 2256.2,1505.5 2257.7,1507.1 2259.2,1483.7 2260.7,1524.5 2262.2,1517.1 2263.7,1519.9 2265.2,1505.2 2266.7,1526.4 2268.2,1513.2 2269.7,1525.2 2271.2,1516.5 2272.7,1528.4 2274.2,1518.3 2275.7,1531.9 2277.3,1497.3 2278.8,1527.2 2280.3,1514.2 2281.8,1522.7 2283.3,1520.7 2284.8,1534.9 2286.3,1510.6 2287.8,1515.5 2289.5,1511.7 2290.1,1457.0 2290.8,1516.6 2292.3,1511.0 2293.8,1521.1 2295.3,1514.3 2296.8,1526.9 2298.3,1504.1 2299.8,1515.6 2301.3,1505.8 2302.8,1530.5 2304.3,1490.2 2305.1,1510.8 2305.7,1360.1 2306.4,1515.8 2307.3,1488.1 2308.8,1505.4 2310.3,1497.6 2311.8,1518.3 2313.3,1508.4 2314.8,1519.6 2316.4,1485.3 2317.9,1509.5 2319.4,1498.2 2320.0,1510.0 2320.7,1339.3 2321.3,1515.0 2322.4,1481.0 2323.9,1517.4 2325.4,1485.7 2326.9,1503.0 2328.4,1493.7 2329.9,1485.1 2331.4,1490.6 2332.9,1478.7 2334.4,1488.3 2335.9,1508.6 2337.4,1493.4 2338.4,1509.0 2339.0,1294.3 2339.7,1514.0 2340.4,1503.3 2341.9,1500.4 2343.4,1507.5 2344.9,1501.3 2346.4,1501.6 2347.9,1503.2 2349.4,1477.7 2350.9,1494.4 2352.4,1487.4 2353.9,1508.5 2355.5,1499.0 2357.0,1496.5 2358.5,1502.7 2360.0,1508.5 2361.5,1497.0 2363.0,1525.2 2364.5,1492.3 2366.0,1510.1 2367.5,1509.7 2369.0,1517.8 2370.5,1506.9 2372.0,1528.0 2373.5,1504.4 2375.0,1522.7 2376.5,1495.5 2378.0,1515.2 2379.5,1511.7 2381.0,1508.9 2382.5,1489.2 2384.0,1509.1 2385.5,1477.0 2387.0,1497.3 2388.5,1494.1 2390.0,1499.6 2391.5,1508.8 2393.0,1512.6 2394.7,1505.7 2395.4,1470.8 2396.0,1510.9 2397.6,1490.7 2399.1,1503.5 2400.6,1523.6 2402.1,1596.1 2403.5,1609.2" fill="none" stroke="#7a9ec9" stroke-width="2.6" stroke-linejoin="round"/>
<polyline points="2619.5,1304.7 2620.1,1302.7 2621.6,1340.5 2623.1,1311.4 2624.6,1322.6 2626.2,1275.6 2627.7,1299.1 2629.2,1291.4 2630.7,1328.2 2632.2,1288.5 2633.7,1319.2 2635.2,1294.6 2636.7,1366.7 2637.2,1299.6 2637.8,1066.0 2638.5,1315.1 2639.7,1324.3 2641.2,1288.9 2642.7,1372.4 2644.2,1273.9 2645.7,1353.8 2647.2,1266.4 2648.7,1321.6 2650.2,1280.3 2651.7,1255.1 2653.2,1294.0 2654.7,1351.4 2656.2,1276.6 2657.7,1489.2 2659.2,1500.8 2660.7,1518.7 2662.2,1508.3 2663.7,1508.8 2665.3,1493.0 2666.8,1499.3 2668.3,1476.5 2669.8,1500.2 2671.3,1489.9 2672.8,1501.6 2674.3,1466.8 2675.8,1476.7 2677.3,1469.7 2678.8,1492.8 2680.0,1488.1 2680.6,1235.5 2681.3,1494.2 2681.8,1505.5 2683.3,1449.8 2684.8,1498.2 2686.3,1462.5 2687.8,1462.7 2689.3,1424.8 2690.8,1470.6 2692.3,1426.6 2693.8,1437.2 2695.3,1405.8 2696.8,1436.4 2698.3,1389.4 2699.8,1413.2 2701.3,1342.2 2701.7,1382.2 2702.4,1152.5 2703.0,1393.6 2704.4,1323.6 2705.9,1359.3 2707.4,1322.3 2708.9,1353.8 2710.5,1331.2 2711.2,1207.8 2711.8,1345.1 2713.4,1269.0 2714.9,1318.2 2716.4,1279.8 2717.9,1347.3 2719.4,1276.2 2720.9,1318.6 2722.4,1261.2 2723.9,1321.3 2725.4,1234.9 2726.9,1315.7 2728.4,1229.1 2729.9,1312.6 2731.4,1265.9 2733.0,1304.7 2733.6,1180.2 2734.3,1319.9 2735.9,1305.0 2737.4,1286.3 2738.9,1329.7 2740.4,1314.7 2742.0,1349.7 2743.5,1272.0 2745.0,1332.1 2746.5,1294.4 2748.0,1318.9 2749.5,1312.0 2751.0,1356.3 2752.5,1313.3 2754.0,1268.7 2754.7,1296.8 2755.3,1242.4 2756.0,1312.4 2757.0,1337.1 2758.5,1314.0 2760.0,1311.0 2761.5,1295.3 2763.0,1326.1 2764.5,1248.3 2766.0,1337.8 2767.5,1253.9 2769.0,1311.6 2770.5,1266.0 2772.0,1297.4 2773.5,1202.6 2775.0,1269.1 2776.5,1217.6 2778.0,1264.2 2779.5,1234.7 2781.1,1288.3 2782.6,1242.7 2784.1,1340.4 2785.6,1242.3 2787.1,1236.9 2787.3,1299.1 2787.9,1200.9 2788.6,1314.6 2790.1,1288.1 2791.6,1286.9 2793.1,1347.0 2794.6,1285.0 2796.1,1324.7 2797.6,1300.2 2799.1,1338.7 2800.6,1287.7 2802.2,1301.8 2802.9,1249.4 2803.5,1317.2 2805.1,1357.9 2806.6,1333.9 2808.1,1323.2 2809.6,1288.5 2811.1,1326.9 2812.6,1262.8 2814.1,1335.6 2815.6,1243.2 2817.1,1334.0 2818.6,1301.3 2820.2,1270.9 2821.7,1276.0 2823.2,1333.4 2824.7,1293.3 2826.2,1340.5 2827.7,1279.7 2829.2,1256.5 2830.7,1261.9 2832.2,1321.5 2832.8,1307.4 2833.4,1173.2 2834.1,1322.5 2835.2,1313.1 2836.7,1280.6 2838.2,1609.2" fill="none" stroke="#7a9ec9" stroke-width="2.6" stroke-linejoin="round"/>
<polyline points="2403.5,1609.2 2619.5,1304.7" fill="none" stroke="#8aaad0" stroke-width="1.7"/>
<polyline points="1532.8,1434.3 1534.3,1438.0 1535.8,1441.8 1537.3,1442.0 1538.8,1442.5 1540.3,1447.2 1541.9,1444.6 1543.4,1442.6 1544.9,1441.5 1546.4,1438.7 1547.9,1440.5 1549.4,1437.3 1550.9,1434.9 1552.4,1436.5 1553.9,1433.6 1555.4,1438.7 1556.9,1439.4 1558.4,1436.1 1559.9,1426.1 1561.4,1432.4 1562.9,1433.4 1564.4,1435.0 1565.9,1436.4 1567.4,1433.9 1568.9,1436.3 1570.4,1430.6 1571.9,1433.1 1573.4,1561.7 1574.9,1562.9 1576.4,1564.7 1577.9,1564.0 1579.4,1565.5 1581.0,1566.4 1582.5,1567.1 1584.0,1567.8 1585.5,1566.4 1587.0,1564.4 1588.5,1562.3 1590.0,1563.0 1591.5,1559.5 1593.0,1557.6 1594.5,1554.7 1596.0,1548.6 1597.5,1540.0 1599.0,1526.7 1600.5,1527.2 1602.0,1519.4 1603.5,1512.4 1605.0,1508.8 1606.5,1500.1 1608.0,1495.3 1609.5,1492.2 1611.0,1490.3 1612.5,1484.6 1614.0,1489.2 1615.5,1481.8 1617.0,1477.9 1618.5,1475.9 1620.1,1468.3 1621.6,1467.2 1623.1,1468.2 1624.6,1471.1 1626.1,1465.4 1627.6,1462.0 1629.1,1465.7 1630.6,1458.9 1632.1,1460.4 1633.6,1460.5 1635.1,1455.4 1636.6,1455.3 1638.1,1453.1 1639.6,1453.1 1641.1,1452.0 1642.6,1448.5 1644.1,1451.1 1645.6,1450.6 1647.1,1449.2 1648.6,1447.9 1650.1,1445.5 1651.6,1440.8 1653.1,1448.0 1654.6,1442.7 1656.1,1442.6 1657.6,1439.8 1659.2,1441.9 1660.1,1432.7 1660.5,1553.8 1660.9,1432.7 1662.2,1440.7 1663.7,1441.7 1665.2,1439.1 1666.7,1442.1 1668.2,1444.6 1669.7,1442.1 1671.2,1442.8 1672.7,1441.4 1674.2,1443.3 1675.7,1442.4 1677.2,1442.5 1678.7,1440.5 1680.2,1443.1 1681.7,1433.7 1683.2,1435.8 1684.7,1436.4 1686.2,1438.9 1687.7,1436.3 1689.2,1438.1 1690.7,1435.6 1692.2,1436.4 1693.7,1433.9 1695.2,1437.4 1696.8,1441.2 1698.3,1436.8 1699.8,1430.1 1701.3,1433.3 1702.8,1433.4 1704.3,1432.6 1705.8,1436.0 1707.3,1430.3 1708.8,1428.1 1710.3,1425.6 1711.8,1434.5 1713.3,1427.9 1714.8,1422.9 1716.3,1421.2 1717.8,1422.9 1719.3,1423.3 1720.8,1421.9 1722.3,1431.5 1723.8,1427.3 1725.3,1426.3 1726.8,1426.0 1728.3,1432.9 1729.8,1425.4 1731.3,1430.7 1732.8,1427.5 1734.3,1426.7 1735.9,1429.3 1737.4,1427.7 1738.9,1426.3 1740.4,1424.8 1741.9,1426.8 1743.4,1431.2 1744.9,1422.1 1746.4,1426.0 1747.9,1421.7 1749.4,1429.5 1750.9,1419.3 1752.4,1426.0 1753.9,1427.1 1755.4,1429.7 1756.9,1420.7 1758.4,1424.7 1759.9,1424.6 1761.4,1420.9 1762.9,1422.8 1764.4,1426.2 1765.9,1422.7 1767.4,1424.0 1768.9,1418.7 1770.4,1423.7 1771.9,1426.3 1773.4,1418.1 1775.0,1417.8 1776.5,1414.4 1778.0,1426.7 1779.5,1420.8 1781.0,1423.2 1782.5,1424.1 1784.0,1432.1 1785.5,1431.0 1787.0,1546.5 1788.5,1545.7 1790.0,1547.2 1791.5,1547.3 1793.0,1540.4 1794.5,1546.8 1796.0,1547.7 1797.5,1547.6 1799.0,1546.7 1800.5,1545.4 1802.0,1546.3 1803.5,1548.0 1805.0,1545.1 1806.5,1546.1 1808.0,1545.9 1809.5,1544.8 1811.0,1546.8 1812.5,1544.0 1814.1,1540.2 1815.6,1534.0 1817.1,1530.4 1818.6,1526.2 1820.1,1520.8 1821.6,1518.1 1823.1,1512.0 1824.6,1509.1 1826.1,1506.4 1827.6,1499.7 1829.1,1499.4 1830.6,1497.1 1832.1,1487.6 1833.6,1485.6 1835.1,1483.1 1836.6,1479.3 1838.1,1474.4 1839.6,1468.8 1841.1,1468.2 1842.6,1463.2 1844.1,1457.7 1845.6,1456.8 1847.1,1452.3 1848.6,1454.3 1850.1,1449.3 1851.7,1443.7 1853.2,1444.5 1854.7,1442.9 1856.2,1444.4 1857.7,1440.8 1859.2,1444.3 1860.7,1444.9 1862.2,1443.7 1863.7,1440.1 1865.2,1444.3 1866.7,1441.7 1868.2,1442.4 1869.7,1433.8 1871.2,1439.4 1872.7,1443.5 1874.2,1440.2 1875.7,1440.8 1877.2,1439.8 1878.7,1438.1 1880.2,1600.6 1881.7,1598.7 1883.2,1597.2 1884.7,1595.5 1886.2,1594.5 1887.7,1593.4 1889.2,1593.4 1890.8,1593.4 1892.3,1593.1 1893.8,1592.6 1895.3,1592.8 1896.8,1591.9 1898.3,1591.5 1899.8,1591.3 1901.3,1591.3 1902.8,1590.9 1904.3,1590.5 1905.8,1590.2 1907.3,1589.5 1908.8,1589.3 1910.3,1588.7 1911.8,1589.0 1913.3,1588.8 1914.8,1588.1 1916.3,1587.6 1917.8,1586.7 1919.3,1587.1 1920.8,1586.6 1922.3,1586.2 1923.8,1585.9 1925.3,1584.9 1926.8,1585.1 1928.3,1584.9 1929.9,1584.2 1931.4,1584.7 1932.9,1584.1 1934.4,1584.5 1935.9,1584.0 1937.4,1583.2 1938.9,1576.4 1940.4,1581.9 1941.9,1581.7 1943.4,1582.1 1944.9,1582.0 1946.4,1581.1 1947.9,1581.1 1949.4,1580.4 1950.9,1581.5 1952.4,1580.7 1953.9,1579.7 1955.4,1579.4 1956.9,1579.1 1958.4,1578.6 1959.9,1579.2 1961.4,1577.9 1962.9,1577.5 1964.4,1577.7 1965.9,1577.7 1967.4,1576.7 1969.0,1578.0 1970.5,1577.3 1972.0,1576.5 1973.5,1576.9 1975.0,1576.5 1976.5,1575.7 1978.0,1572.7 1979.5,1576.0 1981.0,1574.6 1982.5,1574.6 1984.0,1574.8 1985.5,1573.4 1987.0,1575.6 1988.5,1573.6 1990.0,1573.6 1991.5,1571.8 1993.0,1571.4 1994.5,1571.2 1996.0,1571.9 1997.5,1571.4 1999.0,1570.7 2000.5,1570.3 2002.0,1571.5 2003.5,1569.6 2005.0,1569.6 2006.6,1569.3 2008.1,1568.8 2009.6,1567.4 2011.1,1567.9 2012.6,1567.1 2014.1,1566.6 2015.6,1567.0 2017.1,1567.0 2018.6,1567.1 2020.1,1566.1 2021.6,1561.0 2023.1,1568.1 2024.6,1566.1 2026.1,1566.5 2027.6,1567.4 2029.1,1566.5 2030.6,1566.3 2032.1,1567.3 2033.6,1566.0 2035.1,1566.6 2036.6,1566.8 2038.1,1567.4 2039.6,1567.9 2041.1,1566.6 2042.6,1567.5 2044.1,1567.6 2045.7,1566.3 2047.2,1566.8 2048.7,1566.9 2050.2,1566.9 2051.7,1566.6 2053.2,1567.7 2054.7,1565.9 2056.2,1566.8 2057.7,1567.6 2059.2,1567.4 2060.7,1566.1 2062.2,1567.9 2063.7,1567.3 2065.2,1566.9 2066.7,1567.7 2068.2,1568.4 2069.7,1567.4 2071.2,1567.6 2072.7,1567.7 2074.2,1566.9 2075.7,1566.5 2077.2,1565.6 2078.7,1567.3 2080.2,1567.1 2081.7,1567.4 2083.2,1567.6 2084.8,1568.7 2086.3,1567.5 2087.8,1567.7 2089.3,1566.2 2090.8,1568.8 2092.3,1567.3 2093.8,1567.7 2095.3,1567.5 2096.8,1566.9 2098.3,1566.8 2099.8,1566.9 2101.3,1567.3 2102.8,1567.4 2104.3,1567.2 2105.8,1566.7 2107.3,1566.4 2108.8,1566.3 2110.3,1567.1 2111.8,1566.2 2113.3,1566.1 2114.8,1567.1 2116.3,1567.7 2117.8,1567.3 2119.3,1567.1 2120.8,1559.2 2122.3,1567.7 2123.9,1566.3 2125.4,1567.4 2126.9,1566.4 2128.4,1567.0 2129.9,1566.2 2131.4,1565.8 2132.9,1566.6 2134.4,1565.8 2135.9,1566.4 2137.4,1567.4 2138.9,1566.0 2140.4,1565.8 2141.9,1564.7 2143.4,1564.7 2144.9,1565.5 2146.4,1565.2 2147.9,1565.6 2149.4,1565.8 2150.9,1565.7 2152.4,1565.5 2153.9,1565.2 2155.4,1566.2 2156.9,1565.5 2158.4,1565.7 2159.9,1565.2 2161.5,1565.6 2163.0,1564.9 2164.5,1564.6 2166.0,1566.0 2167.5,1564.4 2169.0,1566.0 2170.5,1565.6 2172.0,1564.6 2173.5,1565.0 2175.0,1564.4 2176.5,1564.2 2178.0,1565.5 2179.5,1560.5 2181.0,1564.9 2182.5,1564.9 2184.0,1564.6 2185.5,1564.2 2187.0,1563.4 2188.5,1558.6 2190.0,1564.1 2191.5,1565.4 2193.0,1565.2 2194.5,1565.8 2196.0,1564.6 2197.5,1565.2 2199.0,1565.6 2200.6,1566.2 2202.1,1564.7 2203.6,1565.2 2205.1,1563.8 2206.6,1565.6 2208.1,1565.4 2209.6,1565.3 2211.1,1565.1 2212.6,1563.6 2214.1,1565.4 2215.6,1564.9 2217.1,1565.2 2218.6,1566.1 2220.1,1565.6 2221.6,1565.3 2223.1,1565.0 2224.6,1565.8 2226.1,1564.8 2227.6,1565.3 2229.1,1565.4 2230.6,1565.8 2232.1,1565.0 2233.6,1565.0 2235.1,1564.6 2236.6,1565.2 2238.1,1564.7 2239.7,1564.9 2241.2,1565.9 2242.7,1564.7 2244.2,1566.0 2245.7,1563.3 2247.2,1565.4 2248.7,1564.7 2250.2,1564.4 2251.7,1566.2 2253.2,1566.3 2254.7,1564.7 2256.2,1564.9 2257.7,1565.3 2259.2,1566.0 2260.7,1565.4 2262.2,1564.9 2263.7,1565.7 2265.2,1566.6 2266.7,1566.0 2268.2,1566.2 2269.7,1566.4 2271.2,1566.5 2272.7,1566.4 2274.2,1566.6 2275.7,1566.4 2277.3,1566.8 2278.8,1565.6 2280.3,1565.6 2281.8,1567.5 2283.3,1566.9 2284.8,1566.3 2286.3,1565.6 2287.8,1566.3 2289.3,1566.8 2290.8,1566.6 2292.3,1566.5 2293.8,1565.8 2295.3,1566.9 2296.8,1566.4 2298.3,1565.8 2299.8,1565.0 2301.3,1564.2 2302.8,1565.1 2304.3,1564.7 2305.8,1565.8 2307.3,1565.7 2308.8,1565.5 2310.3,1564.8 2311.8,1563.8 2313.3,1565.4 2314.8,1565.4 2316.4,1566.1 2317.9,1564.1 2319.4,1563.8 2320.9,1563.7 2322.4,1564.8 2323.9,1565.2 2325.4,1563.8 2326.9,1564.1 2328.4,1564.9 2329.9,1563.5 2331.4,1564.9 2332.9,1564.6 2334.4,1564.3 2335.9,1564.0 2337.4,1563.5 2338.9,1564.8 2340.4,1565.7 2341.9,1563.1 2343.4,1565.7 2344.9,1565.7 2346.4,1565.8 2347.9,1566.2 2349.4,1566.3 2350.9,1566.5 2352.4,1566.0 2353.9,1565.6 2355.5,1566.7 2357.0,1565.9 2358.5,1565.8 2360.0,1566.8 2361.5,1566.8 2363.0,1566.1 2364.5,1568.8 2366.0,1565.2 2367.5,1567.7 2369.0,1567.1 2370.5,1567.5 2372.0,1566.6 2373.5,1567.3 2375.0,1565.6 2376.5,1562.4 2378.0,1566.2 2379.5,1565.2 2381.0,1565.5 2382.5,1565.6 2384.0,1565.6 2385.5,1565.5 2387.0,1565.1 2388.5,1563.2 2390.0,1563.9 2391.5,1560.8 2393.0,1564.1 2394.6,1563.7 2396.1,1564.9 2397.6,1564.2 2399.1,1564.3 2400.6,1564.4 2402.1,1602.7 2403.5,1609.2" fill="none" stroke="#e8ad52" stroke-width="2.2" stroke-linejoin="round"/>
<polyline points="2616.1,1427.9 2620.1,1429.7 2621.6,1423.8 2623.1,1428.9 2624.6,1421.1 2626.2,1428.1 2627.7,1425.4 2629.2,1425.3 2630.7,1422.2 2632.2,1425.4 2633.7,1424.9 2635.2,1430.8 2636.7,1425.5 2638.2,1427.7 2639.7,1430.1 2641.2,1429.7 2642.7,1427.8 2644.2,1427.1 2645.7,1430.1 2647.2,1428.6 2648.7,1427.6 2650.2,1427.3 2651.7,1425.2 2653.2,1429.6 2654.7,1425.1 2656.2,1428.8 2657.7,1562.3 2659.2,1562.6 2660.7,1562.6 2662.2,1563.2 2663.7,1560.9 2665.3,1562.1 2666.8,1562.3 2668.3,1560.0 2669.8,1559.8 2671.3,1557.8 2672.8,1549.9 2674.3,1545.6 2675.8,1538.1 2677.3,1531.7 2678.8,1526.8 2680.3,1518.8 2681.8,1515.0 2683.3,1509.1 2684.8,1504.8 2686.3,1498.7 2687.8,1490.1 2689.3,1486.0 2690.8,1483.0 2692.3,1477.4 2693.8,1471.2 2695.3,1465.4 2696.8,1468.9 2698.3,1464.3 2699.8,1462.3 2701.3,1460.7 2702.8,1458.8 2704.4,1461.0 2705.9,1455.8 2707.4,1455.5 2708.9,1454.0 2710.4,1455.5 2711.9,1451.4 2713.4,1447.5 2714.9,1441.8 2716.4,1443.6 2717.9,1442.6 2719.4,1439.6 2720.9,1440.0 2722.4,1437.6 2723.9,1438.7 2725.4,1439.1 2726.9,1436.8 2728.4,1431.5 2729.9,1431.3 2731.4,1432.6 2732.9,1430.1 2734.4,1435.4 2735.9,1425.0 2737.4,1423.6 2738.9,1426.5 2740.4,1431.7 2742.0,1423.6 2743.5,1421.5 2745.0,1428.0 2746.5,1424.9 2748.0,1415.3 2749.5,1424.7 2751.0,1421.8 2752.5,1425.3 2754.0,1423.9 2755.5,1428.2 2757.0,1426.0 2758.5,1428.8 2760.0,1424.8 2761.5,1431.1 2763.0,1416.9 2764.5,1420.1 2766.0,1424.8 2767.5,1427.3 2769.0,1421.5 2770.5,1424.8 2772.0,1424.1 2773.5,1431.2 2775.0,1419.9 2776.5,1427.7 2778.0,1430.0 2779.5,1430.1 2781.1,1436.4 2782.6,1435.5 2784.1,1435.6 2785.6,1440.0 2787.1,1439.2 2788.6,1447.2 2790.1,1444.9 2791.6,1451.7 2793.1,1456.7 2794.6,1449.8 2796.1,1458.6 2797.6,1452.9 2799.1,1456.0 2800.6,1448.4 2802.1,1449.7 2803.6,1447.1 2805.1,1453.6 2806.6,1452.6 2808.1,1456.3 2809.6,1448.4 2811.1,1452.9 2812.6,1453.3 2814.1,1456.1 2815.6,1451.4 2817.1,1450.1 2818.6,1451.0 2820.2,1449.1 2821.7,1448.4 2823.2,1451.8 2824.7,1447.7 2826.2,1449.1 2827.7,1450.1 2829.2,1443.2 2830.7,1445.0 2832.2,1445.1 2833.7,1442.4 2835.2,1441.8 2836.7,1442.1 2838.2,1609.2" fill="none" stroke="#e8ad52" stroke-width="2.2" stroke-linejoin="round"/>
<polyline points="2403.5,1609.2 2616.1,1427.9" fill="none" stroke="#eab56a" stroke-width="1.6"/>
<polyline points="1532.8,1609.2 2838.2,1609.2" fill="none" stroke="#b090b0" stroke-width="2.6"/>
</svg>
<div class="t" style="right:2148.5px;top:1661.7px;font-size:27px;line-height:27px;color:#444;font-weight:400;-webkit-text-stroke:0.4px #444;">-100.0</div>
<div class="t" style="right:2148.5px;top:1592.5px;font-size:27px;line-height:27px;color:#444;font-weight:400;-webkit-text-stroke:0.4px #444;">0</div>
<div class="t" style="right:2148.5px;top:1523.3px;font-size:27px;line-height:27px;color:#444;font-weight:400;-webkit-text-stroke:0.4px #444;">100.0</div>
<div class="t" style="right:2148.5px;top:1454.1px;font-size:27px;line-height:27px;color:#444;font-weight:400;-webkit-text-stroke:0.4px #444;">200.0</div>
<div class="t" style="right:2148.5px;top:1384.9px;font-size:27px;line-height:27px;color:#444;font-weight:400;-webkit-text-stroke:0.4px #444;">300.0</div>
<div class="t" style="right:2148.5px;top:1315.7px;font-size:27px;line-height:27px;color:#444;font-weight:400;-webkit-text-stroke:0.4px #444;">400.0</div>
<div class="t" style="right:2148.5px;top:1246.5px;font-size:27px;line-height:27px;color:#444;font-weight:400;-webkit-text-stroke:0.4px #444;">500.0</div>
<div class="t" style="right:2148.5px;top:1177.3px;font-size:27px;line-height:27px;color:#444;font-weight:400;-webkit-text-stroke:0.4px #444;">600.0</div>
<div class="t" style="right:2148.5px;top:1108.1px;font-size:27px;line-height:27px;color:#444;font-weight:400;-webkit-text-stroke:0.4px #444;">700.0</div>
<div class="t" style="right:2148.5px;top:1038.9px;font-size:27px;line-height:27px;color:#444;font-weight:400;-webkit-text-stroke:0.4px #444;">800.0</div>
<div class="t" style="right:2148.5px;top:969.7px;font-size:27px;line-height:27px;color:#444;font-weight:400;-webkit-text-stroke:0.4px #444;">900.0</div>
<div class="t" style="left:825.0px;width:1000px;text-align:center;top:1703.8px;font-size:24.5px;line-height:24.5px;color:#333;font-weight:400;-webkit-text-stroke:0.35px #333;">5-Dec-2012</div>
<div class="t" style="left:1042.5px;width:1000px;text-align:center;top:1703.8px;font-size:24.5px;line-height:24.5px;color:#333;font-weight:400;-webkit-text-stroke:0.35px #333;">6-Dec-2012</div>
<div class="t" style="left:1259.9px;width:1000px;text-align:center;top:1703.8px;font-size:24.5px;line-height:24.5px;color:#333;font-weight:400;-webkit-text-stroke:0.35px #333;">7-Dec-2012</div>
<div class="t" style="left:1477.4px;width:1000px;text-align:center;top:1703.8px;font-size:24.5px;line-height:24.5px;color:#333;font-weight:400;-webkit-text-stroke:0.35px #333;">8-Dec-2012</div>
<div class="t" style="left:1694.9px;width:1000px;text-align:center;top:1703.8px;font-size:24.5px;line-height:24.5px;color:#333;font-weight:400;-webkit-text-stroke:0.35px #333;">9-Dec-2012</div>
<div class="t" style="left:1912.4px;width:1000px;text-align:center;top:1703.8px;font-size:24.5px;line-height:24.5px;color:#333;font-weight:400;-webkit-text-stroke:0.35px #333;">10-Dec-2012</div>
<div class="t" style="left:2129.8px;width:1000px;text-align:center;top:1703.8px;font-size:24.5px;line-height:24.5px;color:#333;font-weight:400;-webkit-text-stroke:0.35px #333;">11-Dec-2012</div>
<div class="t" style="left:2347.3px;width:1000px;text-align:center;top:1703.8px;font-size:24.5px;line-height:24.5px;color:#333;font-weight:400;-webkit-text-stroke:0.35px #333;">12-Dec-2012</div>
<div class="t" style="left:1617.5px;top:939.8px;font-size:39px;line-height:39px;color:#5d5354;font-weight:400;letter-spacing:3.5px;-webkit-text-stroke:0.9px #5d5354;transform:scaleX(0.848);transform-origin:0 0;">QUERIES PER SECOND (5 MINUTES AVERAGE)</div>
<div style="position:absolute;left:1349px;top:1010px;width:143px;height:111px;background:rgba(255,255,255,0.85);border:2px solid #ccc;box-sizing:border-box"></div>
<div style="position:absolute;left:1352px;top:1016px;width:31px;height:29px;background:#fff;border:2px solid #ccc;box-sizing:border-box"></div>
<div style="position:absolute;left:1355px;top:1020px;width:25px;height:21px;background:#7a9dc8"></div>
<div class="t" style="left:1383.0px;top:1017.6px;font-size:25px;line-height:25px;color:#222;font-weight:400;">Maximum</div>
<div style="position:absolute;left:1352px;top:1052px;width:31px;height:29px;background:#fff;border:2px solid #ccc;box-sizing:border-box"></div>
<div style="position:absolute;left:1355px;top:1056px;width:25px;height:21px;background:#ebb050"></div>
<div class="t" style="left:1383.0px;top:1053.4px;font-size:25px;line-height:25px;color:#222;font-weight:400;">Average</div>
<div style="position:absolute;left:1352px;top:1088px;width:31px;height:29px;background:#fff;border:2px solid #ccc;box-sizing:border-box"></div>
<div style="position:absolute;left:1355px;top:1092px;width:25px;height:21px;background:#a57fa4"></div>
<div class="t" style="left:1383.0px;top:1089.2px;font-size:25px;line-height:25px;color:#222;font-weight:400;">Minimum</div>
<div style="position:absolute;left:1231px;top:1734px;width:178px;height:60px;background:linear-gradient(#fff,#eee);border:2px solid #ccc;border-radius:8px;box-sizing:border-box"></div>
<div class="t" style="left:1258.0px;top:1755.9px;font-size:28.5px;line-height:28.5px;color:#333;font-weight:400;">Download</div>
<div style="position:absolute;left:636px;top:1680px;width:2260px;height:92px;background:linear-gradient(rgba(0,0,0,0),rgba(0,0,0,0.06))"></div>
<div style="position:absolute;left:3334px;top:1693px;width:100px;height:59px;background:#fff"></div>
<div style="position:absolute;left:3342px;top:1701px;width:84px;height:43px;background:#fff;border:2px solid #c4c4c4;box-sizing:border-box"></div>
<div class="t" style="left:2884.0px;width:1000px;text-align:center;top:1717.4px;font-size:22px;line-height:22px;color:#111;font-weight:700;">^</div>
<div style="position:absolute;left:0;top:1752px;width:20px;height:20px;background:radial-gradient(circle at 20px 0,transparent 20px,#0b1020 20.5px)"></div>
<div style="position:absolute;left:3434px;top:1752px;width:20px;height:20px;background:radial-gradient(circle at 0 0,transparent 20px,#0b1020 20.5px)"></div>
</body></html>
